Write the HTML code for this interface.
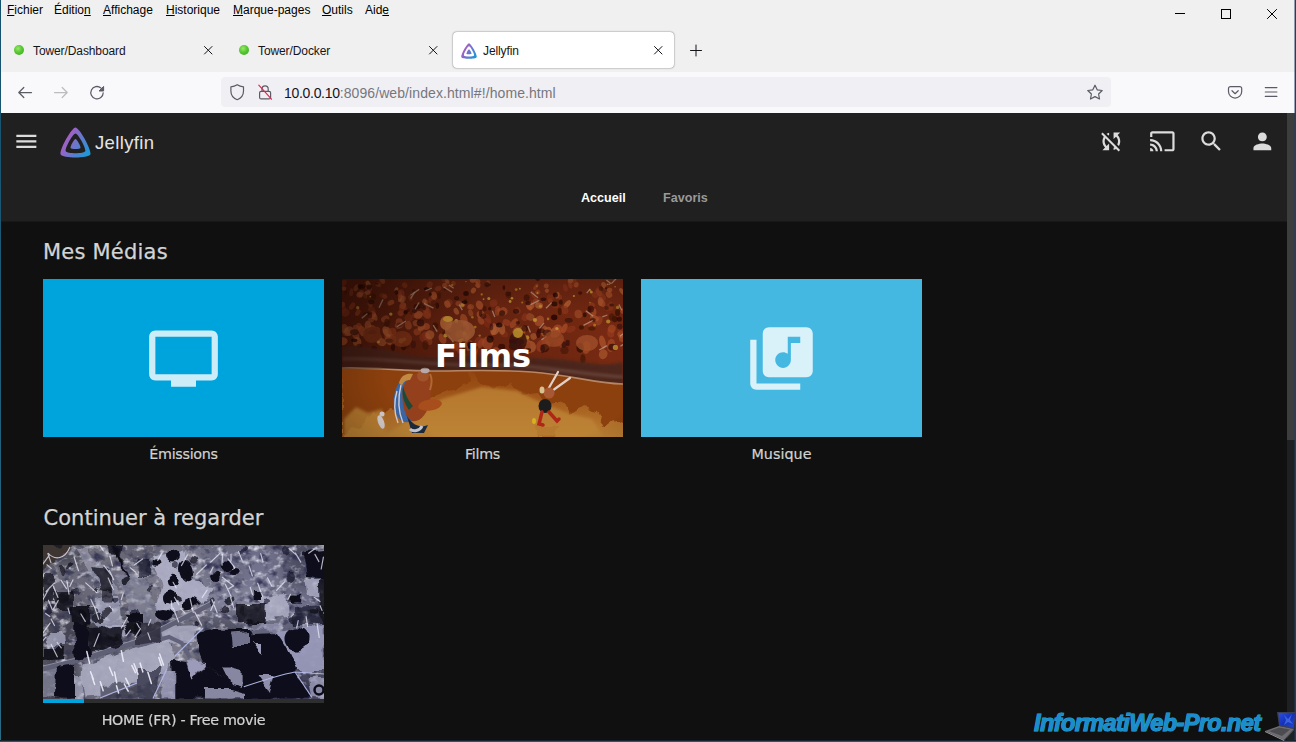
<!DOCTYPE html>
<html lang="fr">
<head>
<meta charset="utf-8">
<title>Jellyfin</title>
<style>
*{box-sizing:border-box;margin:0;padding:0}
html,body{width:1296px;height:742px;overflow:hidden;background:#101010}
body{position:relative;font-family:"Liberation Sans",sans-serif;color:#15141a}
.abs{position:absolute}
#menubar{left:0;top:0;width:1296px;height:30px;background:#f0f0f0}
#menubar span{position:absolute;top:3px;font-size:12px;line-height:14px;color:#000;white-space:nowrap}
#menubar u{text-decoration-thickness:1px;text-underline-offset:1px}
#tabbar{left:0;top:30px;width:1296px;height:42px;background:#f0f0f0}
.tabtxt{position:absolute;top:44px;font-size:12px;line-height:14px;letter-spacing:-.1px;color:#15141a;white-space:nowrap}
.dot{position:absolute;width:10px;height:10px;border-radius:50%;background:radial-gradient(circle at 40% 35%,#9be86a 0%,#55c832 45%,#3aa51e 100%)}
#acttab{left:453px;top:32px;width:221px;height:36px;background:#fff;border-radius:4px;box-shadow:0 0 2px rgba(0,0,0,.45),0 0 1px rgba(0,0,0,.3)}
#navbar{left:0;top:72px;width:1296px;height:41px;background:#f9f9fb}
#urlbar{left:221px;top:77px;width:890px;height:30px;background:#f0f0f4;border-radius:4px}
#url{left:284px;top:85px;font-size:14px;line-height:16px;white-space:nowrap;color:#15141a;letter-spacing:-.3px}
#url i{font-style:normal;color:#77767d;letter-spacing:.09px}
#page{left:1px;top:113px;width:1286px;height:628px;background:#101010;overflow:hidden}
#hdr{left:0;top:0;width:1286px;height:109px;background:linear-gradient(#202020 0,#202020 108px,#181818 108px)}
.jf{font-family:"DejaVu Sans","Liberation Sans",sans-serif}
#sb{left:1287px;top:113px;width:8px;height:628px;background:#1f2021}
#sbthumb{left:1287px;top:113px;width:8px;height:327px;background:#3d3d3d}
#bl{left:0;top:0;width:1px;height:742px;background:linear-gradient(#15506d,#2a6a85)}
#br{left:1294px;top:0;width:2px;height:742px;background:linear-gradient(to right,rgba(30,60,100,.45) 0,rgba(30,60,100,.45) 50%,#1f3f68 50%)}
#bb{left:0;top:740px;width:1296px;height:2px;background:linear-gradient(#15252f 0,#15252f 50%,#2b566c 50%)}

.ic{position:absolute;width:26.700px;height:26.700px;fill:#dcdcdc}
#logotxt{left:94px;top:18.500px;font-family:"Liberation Sans",sans-serif;font-size:18.500px;line-height:22px;letter-spacing:.35px;color:#e4e4e4;white-space:nowrap}
.tab{position:absolute;top:77px;font-family:"Liberation Sans",sans-serif;font-weight:700;font-size:12.600px;line-height:16px;white-space:nowrap}
h2.sec{position:absolute;left:42px;letter-spacing:.22px;font-family:"DejaVu Sans","Liberation Sans",sans-serif;font-weight:400;font-size:21px;line-height:26px;color:#d4d4d4;white-space:nowrap;-webkit-text-stroke:.25px #d4d4d4}
.card{position:absolute;width:281px;height:158px;overflow:hidden}
.lbl{position:absolute;width:281px;text-align:center;font-family:"DejaVu Sans","Liberation Sans",sans-serif;font-size:14.300px;line-height:18px;letter-spacing:-.3px;color:#d2d2d2;white-space:nowrap;-webkit-text-stroke:.2px #d2d2d2}
.big{position:absolute;left:103px;top:41.500px;width:75px;height:75px;fill:rgba(255,255,255,.8)}

#wm{left:1034px;top:708px;font-family:"Liberation Sans",sans-serif;font-style:italic;font-weight:700;font-size:23.500px;line-height:30px;color:#1b8ccc;white-space:nowrap;-webkit-text-stroke:1.100px #27a9d9;paint-order:stroke fill;letter-spacing:-.6px}
</style>
</head>
<body>
<div id="menubar" class="abs">
<span style="left:7px"><u>F</u>ichier</span>
<span style="left:54px">Éditio<u>n</u></span>
<span style="left:103px"><u>A</u>ffichage</span>
<span style="left:166px"><u>H</u>istorique</span>
<span style="left:233px"><u>M</u>arque-pages</span>
<span style="left:322px"><u>O</u>utils</span>
<span style="left:365px">Aid<u>e</u></span>
</div>
<div id="tabbar" class="abs"></div>
<div id="acttab" class="abs"></div>
<div class="dot" style="left:14px;top:45px"></div>
<div class="tabtxt" style="left:33px">Tower/Dashboard</div>
<div class="dot" style="left:239px;top:45px"></div>
<div class="tabtxt" style="left:258px">Tower/Docker</div>
<div class="tabtxt" style="left:483px">Jellyfin</div>
<div id="navbar" class="abs"></div>
<div id="urlbar" class="abs"></div>
<div id="url" class="abs">10.0.0.10<i>:8096/web/index.html#!/home.html</i></div>


<svg class="abs" style="left:0;top:0" width="1296" height="113" viewBox="0 0 1296 113" fill="none" stroke="#15141a" stroke-width="1.1" stroke-linecap="round" stroke-linejoin="round">
<!-- window controls -->
<g stroke="#000" stroke-width="1" stroke-linecap="butt" shape-rendering="crispEdges">
<path d="M1175 13.5h10"/>
<rect x="1221.5" y="9.500" width="9" height="9"/>
</g>
<path d="M1267.500 9.500l9 9M1276.500 9.500l-9 9" stroke="#000" stroke-width="1" stroke-linecap="square"/>
<!-- tab close buttons -->
<g stroke="#15141a" stroke-width="1">
<path d="M204.500 46.500l7.500 7.500M212 46.500l-7.500 7.500"/>
<path d="M429.500 46.500l7.500 7.500M437 46.500l-7.500 7.500"/>
<path d="M654.500 46.500l7.500 7.500M662 46.500l-7.500 7.500"/>
<path d="M690.500 50.500h11M696 45v11"/>
</g>
<!-- back -->
<g stroke="#5b5b66" stroke-width="1.25">
<path d="M31.500 92.500H19M23.800 87.500L18.800 92.500l5 5"/>
</g>
<g stroke="#bcbcc1" stroke-width="1.25">
<path d="M54.500 92.500H67M62.200 87.500l5 5-5 5"/>
</g>
<!-- reload -->
<g stroke="#5b5b66" stroke-width="1.25">
<path d="M103.200 92.800a6.200 6.200 0 1 1-2.300-4.900"/>
<path d="M103.600 86.800v4.200h-4.200z" fill="#5b5b66" stroke-width="1"/>
</g>
<!-- shield -->
<path d="M237.200 84.700c-2 1.300-4 1.900-6.300 2.100v4.200c0 4.200 2.400 7.200 6.300 8.700 3.900-1.500 6.300-4.500 6.300-8.700v-4.200c-2.300-.2-4.300-.8-6.300-2.100z" stroke="#5b5b66" stroke-width="1.2"/>
<!-- lock -->
<g stroke="#5b5b66" stroke-width="1.2">
<rect x="259.600" y="91.300" width="11" height="7.600" rx="1.500"/>
<path d="M262 91.300v-2.300a3.100 3.100 0 0 1 6.200 0v2.300"/>
</g>
<path d="M258.800 85.200l12.700 14" stroke="#e22850" stroke-width="1.2"/>
<!-- star -->
<path d="M1095 85.200l2.200 4.600 5 .7-3.600 3.500.9 5-4.500-2.400-4.500 2.400.9-5-3.600-3.500 5-.7z" stroke="#5b5b66" stroke-width="1.2"/>
<!-- pocket -->
<g stroke="#5b5b66" stroke-width="1.2">
<path d="M1230.400 86.600h9.400a1.900 1.900 0 0 1 1.900 1.900v3a6.600 6.600 0 0 1-13.200 0v-3a1.900 1.900 0 0 1 1.900-1.900z"/>
<path d="M1232 90.700l3.100 3 3.100-3"/>
</g>
<!-- hamburger -->
<path d="M1265.300 87.600h11.600M1265.300 92h11.600M1265.300 96.400h11.600" stroke="#5b5b66" stroke-width="1.2"/>
</svg>
<!-- favicon -->
<svg class="abs" style="left:461px;top:42.500px" width="16" height="16" viewBox="50 50 412 412">
<defs><linearGradient id="jg1" gradientUnits="userSpaceOnUse" x1="110.250" y1="213.300" x2="496.140" y2="436.090"><stop offset="0" stop-color="#aa5cc3"/><stop offset="1" stop-color="#00a4dc"/></linearGradient></defs>
<path d="M190.560 329.070c8.630 17.300 122.400 17.120 130.930 0 8.520-17.100-47.900-119.780-65.460-119.800-17.570 0-74.100 102.500-65.470 119.800z" fill="url(#jg1)"/>
<path fill-rule="evenodd" d="M58.750 417.030c25.970 52.150 368.860 51.550 394.550 0S308.930 56.080 256.030 56.080c-52.920 0-223.250 308.800-197.280 360.950zm68.040-45.250c-17.020-34.170 94.600-236.500 129.260-236.500 34.670 0 146.100 202.700 129.260 236.500-16.830 33.800-241.500 34.170-258.520 0z" fill="url(#jg1)"/>
</svg>

<div id="page" class="abs">
<div id="hdr" class="abs"></div>
<svg class="ic" style="left:11.700px;top:15px" viewBox="0 0 24 24"><path d="M3 18h18v-2H3v2zm0-5h18v-2H3v2zm0-7v2h18V6H3z"/></svg>
<svg class="abs" style="left:59px;top:13.500px" width="31" height="31" viewBox="50 50 412 412">
<defs><linearGradient id="jg2" gradientUnits="userSpaceOnUse" x1="110.250" y1="213.300" x2="496.140" y2="436.090"><stop offset="0" stop-color="#aa5cc3"/><stop offset="1" stop-color="#00a4dc"/></linearGradient></defs>
<path d="M190.560 329.070c8.630 17.300 122.400 17.120 130.930 0 8.520-17.100-47.900-119.780-65.460-119.800-17.570 0-74.100 102.500-65.470 119.800z" fill="url(#jg2)"/>
<path fill-rule="evenodd" d="M58.750 417.030c25.970 52.150 368.860 51.550 394.550 0S308.930 56.080 256.030 56.080c-52.920 0-223.250 308.800-197.280 360.950zm68.040-45.250c-17.020-34.170 94.600-236.500 129.260-236.500 34.670 0 146.100 202.700 129.260 236.500-16.830 33.800-241.500 34.170-258.520 0z" fill="url(#jg2)"/>
</svg>
<div id="logotxt" class="abs">Jellyfin</div>
<svg class="ic" style="left:1097.400px;top:15px" viewBox="0 0 24 24"><path d="M10 6.350V4.260c-.8.210-1.550.540-2.230.960l1.460 1.460c.250-.120.500-.240.770-.330zm-7.140-.940l2.360 2.360C4.450 8.990 4 10.440 4 12c0 2.210.910 4.200 2.360 5.640L4 20h6v-6l-2.240 2.240C6.680 15.150 6 13.660 6 12c0-1 .250-1.940.680-2.770l8.080 8.080c-.250.130-.5.250-.770.340v2.090c.8-.210 1.550-.540 2.230-.960l2.360 2.360 1.270-1.270L4.140 4.140 2.860 5.410zM20 4h-6v6l2.240-2.240C17.320 8.850 18 10.340 18 12c0 1-.250 1.940-.680 2.770l1.460 1.460C19.550 15.010 20 13.560 20 12c0-2.210-.910-4.200-2.360-5.640L20 4z"/></svg>
<svg class="ic" style="left:1147.800px;top:15px" viewBox="0 0 24 24"><path d="M21 3H3c-1.100 0-2 .9-2 2v3h2V5h18v14h-7v2h7c1.100 0 2-.9 2-2V5c0-1.100-.9-2-2-2zM1 18v3h3c0-1.660-1.340-3-3-3zm0-4v2c2.760 0 5 2.240 5 5h2c0-3.870-3.130-7-7-7zm0-4v2c4.970 0 9 4.030 9 9h2c0-6.080-4.930-11-11-11z"/></svg>
<svg class="ic" style="left:1197.300px;top:15px" viewBox="0 0 24 24"><path d="M15.500 14h-.79l-.28-.27C15.410 12.590 16 11.110 16 9.500 16 5.910 13.090 3 9.500 3S3 5.910 3 9.500 5.910 16 9.500 16c1.610 0 3.090-.59 4.230-1.570l.27.280v.79l5 4.990L20.490 19l-4.990-5zm-6 0C7.010 14 5 11.990 5 9.500S7.010 5 9.500 5 14 7.010 14 9.500 11.990 14 9.500 14z"/></svg>
<svg class="ic" style="left:1247.600px;top:15px" viewBox="0 0 24 24"><path d="M12 12c2.210 0 4-1.790 4-4s-1.790-4-4-4-4 1.790-4 4 1.790 4 4 4zm0 2c-2.670 0-8 1.340-8 4v2h16v-2c0-2.660-5.330-4-8-4z"/></svg>
<div class="tab" style="left:580px;color:#fff">Accueil</div>
<div class="tab" style="left:662px;color:#999">Favoris</div>

<h2 class="sec" style="top:126px">Mes Médias</h2>
<div class="card" style="left:42px;top:166px;background:#00a4dc">
<svg class="big" viewBox="0 0 24 24"><path fill-rule="evenodd" d="M21 3H3c-1.100 0-2 .9-2 2v12c0 1.100.9 2 2 2h5v2h8v-2h5c1.100 0 1.990-.9 1.990-2L23 5c0-1.100-.9-2-2-2zm0 14H3V5h18v12z"/></svg>
</div>
<div class="card" id="films" style="left:341px;top:166px;background:#7a3517">
<svg class="abs" style="left:0;top:0" width="281" height="158" viewBox="0 0 281 158">
<defs>
<linearGradient id="fg1" x1="0" y1="0" x2="1" y2="0"><stop offset="0" stop-color="#561c0c"/><stop offset=".5" stop-color="#6c2611"/><stop offset="1" stop-color="#7a2a12"/></linearGradient>
<linearGradient id="fg2" x1="0" y1="0" x2="0" y2="1"><stop offset="0" stop-color="#8e420f"/><stop offset=".45" stop-color="#a2581b"/><stop offset="1" stop-color="#bb8034"/></linearGradient>
<radialGradient id="fvig" cx=".6" cy=".62" r=".8"><stop offset=".55" stop-color="#000" stop-opacity="0"/><stop offset="1" stop-color="#000" stop-opacity=".3"/></radialGradient>
<linearGradient id="fleft" x1="0" y1="0" x2="1" y2="0"><stop offset="0" stop-color="#1a0500" stop-opacity=".38"/><stop offset=".5" stop-color="#1a0500" stop-opacity=".12"/><stop offset="1" stop-color="#1a0500" stop-opacity="0"/></linearGradient>
<filter id="fd1" x="-5%" y="-5%" width="110%" height="110%"><feTurbulence type="fractalNoise" baseFrequency=".09" numOctaves="2" seed="8" result="t"/><feDisplacementMap in="SourceGraphic" in2="t" scale="10" xChannelSelector="R" yChannelSelector="G"/><feGaussianBlur stdDeviation=".6"/></filter>
<filter id="fb2" x="-10%" y="-10%" width="120%" height="120%"><feGaussianBlur stdDeviation="1.600"/></filter>
<filter id="fb1" x="-10%" y="-10%" width="120%" height="120%"><feGaussianBlur stdDeviation=".7"/></filter>
<filter id="fb0" x="-5%" y="-5%" width="110%" height="110%"><feGaussianBlur stdDeviation=".55"/></filter>
<clipPath id="fsand"><path d="M0 89C30 88 60 92 90 92S150 90 190 93 250 104 281 105V158H0z"/></clipPath>
<clipPath id="fc"><rect width="281" height="158"/></clipPath>
</defs>
<g clip-path="url(#fc)">
<rect width="281" height="158" fill="url(#fg1)"/>
<g filter="url(#fb0)">
<ellipse cx="175.0" cy="53.3" rx="4.8" ry="6.1" fill="#bc6636" opacity="0.46" transform="rotate(19 175.0 53.3)"/>
<ellipse cx="218.0" cy="18.3" rx="2.0" ry="2.6" fill="#a04020" opacity="0.61" transform="rotate(-9 218.0 18.3)"/>
<ellipse cx="107.0" cy="7.0" rx="2.1" ry="3.3" fill="#92361a" opacity="0.55" transform="rotate(9 107.0 7.0)"/>
<ellipse cx="44.8" cy="54.2" rx="3.1" ry="5.1" fill="#b85a2e" opacity="0.50" transform="rotate(-40 44.8 54.2)"/>
<ellipse cx="58.9" cy="14.3" rx="3.6" ry="4.0" fill="#a04020" opacity="0.56" transform="rotate(-15 58.9 14.3)"/>
<ellipse cx="151.5" cy="50.2" rx="3.2" ry="6.0" fill="#b85a2e" opacity="0.79" transform="rotate(9 151.5 50.2)"/>
<ellipse cx="84.0" cy="23.5" rx="2.4" ry="2.7" fill="#ae4e28" opacity="0.57" transform="rotate(37 84.0 23.5)"/>
<ellipse cx="164.7" cy="43.5" rx="4.2" ry="3.1" fill="#a04020" opacity="0.74" transform="rotate(21 164.7 43.5)"/>
<ellipse cx="195.7" cy="13.1" rx="2.6" ry="2.5" fill="#a04020" opacity="0.79" transform="rotate(-38 195.7 13.1)"/>
<ellipse cx="266.7" cy="28.5" rx="3.0" ry="3.9" fill="#92361a" opacity="0.58" transform="rotate(34 266.7 28.5)"/>
<ellipse cx="236.4" cy="35.0" rx="3.9" ry="4.3" fill="#b85a2e" opacity="0.49" transform="rotate(-9 236.4 35.0)"/>
<ellipse cx="261.2" cy="75.2" rx="4.3" ry="5.0" fill="#bc6636" opacity="0.54" transform="rotate(19 261.2 75.2)"/>
<ellipse cx="30.4" cy="51.3" rx="4.8" ry="5.8" fill="#ae4e28" opacity="0.60" transform="rotate(-29 30.4 51.3)"/>
<ellipse cx="58.6" cy="34.1" rx="3.1" ry="3.0" fill="#a04020" opacity="0.77" transform="rotate(29 58.6 34.1)"/>
<ellipse cx="25.9" cy="46.8" rx="3.3" ry="5.4" fill="#b85a2e" opacity="0.70" transform="rotate(-1 25.9 46.8)"/>
<ellipse cx="280.1" cy="12.7" rx="1.9" ry="4.1" fill="#bc6636" opacity="0.77" transform="rotate(-36 280.1 12.7)"/>
<ellipse cx="66.7" cy="39.0" rx="4.3" ry="4.0" fill="#92361a" opacity="0.50" transform="rotate(-36 66.7 39.0)"/>
<ellipse cx="225.3" cy="25.1" rx="2.5" ry="4.8" fill="#bc6636" opacity="0.78" transform="rotate(40 225.3 25.1)"/>
<ellipse cx="251.9" cy="32.9" rx="2.6" ry="3.6" fill="#ae4e28" opacity="0.75" transform="rotate(-3 251.9 32.9)"/>
<ellipse cx="39.7" cy="63.1" rx="4.7" ry="4.0" fill="#bc6636" opacity="0.61" transform="rotate(22 39.7 63.1)"/>
<ellipse cx="193.6" cy="22.5" rx="2.6" ry="3.4" fill="#b85a2e" opacity="0.49" transform="rotate(28 193.6 22.5)"/>
<ellipse cx="269.7" cy="49.8" rx="3.9" ry="4.1" fill="#ae4e28" opacity="0.62" transform="rotate(25 269.7 49.8)"/>
<ellipse cx="219.7" cy="64.1" rx="4.0" ry="6.1" fill="#a04020" opacity="0.69" transform="rotate(-36 219.7 64.1)"/>
<ellipse cx="213.5" cy="26.4" rx="3.6" ry="3.1" fill="#92361a" opacity="0.54" transform="rotate(-3 213.5 26.4)"/>
<ellipse cx="268.9" cy="27.0" rx="2.5" ry="4.6" fill="#92361a" opacity="0.64" transform="rotate(-8 268.9 27.0)"/>
<ellipse cx="91.6" cy="18.0" rx="2.5" ry="3.3" fill="#a04020" opacity="0.57" transform="rotate(4 91.6 18.0)"/>
<ellipse cx="207.3" cy="59.4" rx="3.8" ry="6.1" fill="#92361a" opacity="0.79" transform="rotate(2 207.3 59.4)"/>
<ellipse cx="145.6" cy="39.3" rx="2.8" ry="5.1" fill="#92361a" opacity="0.55" transform="rotate(-30 145.6 39.3)"/>
<ellipse cx="202.2" cy="52.0" rx="3.1" ry="5.5" fill="#bc6636" opacity="0.63" transform="rotate(13 202.2 52.0)"/>
<ellipse cx="85.0" cy="36.1" rx="4.3" ry="3.4" fill="#ae4e28" opacity="0.52" transform="rotate(35 85.0 36.1)"/>
<ellipse cx="123.9" cy="46.7" rx="3.1" ry="5.0" fill="#ae4e28" opacity="0.80" transform="rotate(-12 123.9 46.7)"/>
<ellipse cx="46.6" cy="60.6" rx="3.2" ry="6.6" fill="#92361a" opacity="0.52" transform="rotate(-36 46.6 60.6)"/>
<ellipse cx="116.8" cy="24.7" rx="3.4" ry="2.6" fill="#b85a2e" opacity="0.53" transform="rotate(7 116.8 24.7)"/>
<ellipse cx="0.2" cy="26.0" rx="2.7" ry="3.4" fill="#ae4e28" opacity="0.69" transform="rotate(30 0.2 26.0)"/>
<ellipse cx="105.1" cy="2.5" rx="2.5" ry="2.0" fill="#bc6636" opacity="0.63" transform="rotate(34 105.1 2.5)"/>
<ellipse cx="82.4" cy="22.9" rx="2.3" ry="3.3" fill="#bc6636" opacity="0.67" transform="rotate(7 82.4 22.9)"/>
<ellipse cx="131.4" cy="11.5" rx="2.4" ry="3.0" fill="#b85a2e" opacity="0.79" transform="rotate(37 131.4 11.5)"/>
<ellipse cx="25.5" cy="56.0" rx="4.6" ry="4.5" fill="#a04020" opacity="0.65" transform="rotate(38 25.5 56.0)"/>
<ellipse cx="151.6" cy="24.1" rx="3.8" ry="3.7" fill="#92361a" opacity="0.60" transform="rotate(-12 151.6 24.1)"/>
<ellipse cx="138.6" cy="35.4" rx="3.9" ry="3.7" fill="#b85a2e" opacity="0.66" transform="rotate(-7 138.6 35.4)"/>
<ellipse cx="208.2" cy="21.6" rx="2.5" ry="2.4" fill="#a04020" opacity="0.62" transform="rotate(-4 208.2 21.6)"/>
<ellipse cx="40.3" cy="1.6" rx="2.6" ry="3.5" fill="#b85a2e" opacity="0.55" transform="rotate(-23 40.3 1.6)"/>
<ellipse cx="232.3" cy="1.0" rx="2.3" ry="2.3" fill="#92361a" opacity="0.72" transform="rotate(-9 232.3 1.0)"/>
<ellipse cx="137.7" cy="62.3" rx="5.0" ry="4.4" fill="#92361a" opacity="0.66" transform="rotate(20 137.7 62.3)"/>
<ellipse cx="145.6" cy="64.0" rx="5.5" ry="6.5" fill="#ae4e28" opacity="0.72" transform="rotate(-2 145.6 64.0)"/>
<ellipse cx="79.3" cy="46.1" rx="4.1" ry="5.1" fill="#ae4e28" opacity="0.61" transform="rotate(6 79.3 46.1)"/>
<ellipse cx="191.6" cy="57.5" rx="3.2" ry="3.3" fill="#bc6636" opacity="0.61" transform="rotate(-27 191.6 57.5)"/>
<ellipse cx="249.5" cy="43.3" rx="2.5" ry="5.1" fill="#92361a" opacity="0.66" transform="rotate(40 249.5 43.3)"/>
<ellipse cx="182.3" cy="61.1" rx="5.3" ry="4.9" fill="#b85a2e" opacity="0.76" transform="rotate(19 182.3 61.1)"/>
<ellipse cx="233.2" cy="5.1" rx="3.0" ry="3.2" fill="#92361a" opacity="0.65" transform="rotate(20 233.2 5.1)"/>
<ellipse cx="255.9" cy="11.4" rx="2.6" ry="3.2" fill="#92361a" opacity="0.79" transform="rotate(28 255.9 11.4)"/>
<ellipse cx="43.1" cy="39.9" rx="4.3" ry="3.0" fill="#b85a2e" opacity="0.54" transform="rotate(-30 43.1 39.9)"/>
<ellipse cx="222.5" cy="49.4" rx="2.7" ry="5.2" fill="#ae4e28" opacity="0.80" transform="rotate(22 222.5 49.4)"/>
<ellipse cx="13.7" cy="56.2" rx="3.4" ry="5.3" fill="#ae4e28" opacity="0.70" transform="rotate(-23 13.7 56.2)"/>
<ellipse cx="279.3" cy="55.4" rx="3.9" ry="3.8" fill="#b85a2e" opacity="0.59" transform="rotate(-20 279.3 55.4)"/>
<ellipse cx="18.9" cy="14.4" rx="2.8" ry="3.5" fill="#ae4e28" opacity="0.55" transform="rotate(33 18.9 14.4)"/>
<ellipse cx="161.6" cy="54.4" rx="5.1" ry="3.6" fill="#92361a" opacity="0.48" transform="rotate(36 161.6 54.4)"/>
<ellipse cx="137.5" cy="26.1" rx="3.5" ry="4.7" fill="#b85a2e" opacity="0.69" transform="rotate(-21 137.5 26.1)"/>
<ellipse cx="159.8" cy="49.8" rx="3.4" ry="5.9" fill="#bc6636" opacity="0.67" transform="rotate(-7 159.8 49.8)"/>
<ellipse cx="17.8" cy="15.9" rx="3.4" ry="2.8" fill="#b85a2e" opacity="0.73" transform="rotate(7 17.8 15.9)"/>
<ellipse cx="127.4" cy="28.2" rx="2.4" ry="2.5" fill="#a04020" opacity="0.48" transform="rotate(-36 127.4 28.2)"/>
<ellipse cx="25.6" cy="8.5" rx="2.7" ry="2.4" fill="#92361a" opacity="0.62" transform="rotate(1 25.6 8.5)"/>
<ellipse cx="30.2" cy="36.3" rx="3.6" ry="3.7" fill="#b85a2e" opacity="0.78" transform="rotate(14 30.2 36.3)"/>
<ellipse cx="191.4" cy="15.8" rx="2.1" ry="4.3" fill="#92361a" opacity="0.74" transform="rotate(-23 191.4 15.8)"/>
<ellipse cx="197.1" cy="26.6" rx="3.9" ry="3.2" fill="#bc6636" opacity="0.70" transform="rotate(9 197.1 26.6)"/>
<ellipse cx="106.3" cy="49.3" rx="3.5" ry="3.9" fill="#92361a" opacity="0.79" transform="rotate(6 106.3 49.3)"/>
<ellipse cx="145.4" cy="44.0" rx="3.9" ry="5.1" fill="#92361a" opacity="0.47" transform="rotate(-36 145.4 44.0)"/>
<ellipse cx="9.3" cy="13.3" rx="1.9" ry="4.0" fill="#92361a" opacity="0.68" transform="rotate(4 9.3 13.3)"/>
<ellipse cx="0.1" cy="30.1" rx="4.1" ry="4.1" fill="#92361a" opacity="0.56" transform="rotate(19 0.1 30.1)"/>
<ellipse cx="28.0" cy="10.6" rx="2.0" ry="2.8" fill="#92361a" opacity="0.75" transform="rotate(20 28.0 10.6)"/>
<ellipse cx="42.7" cy="17.3" rx="2.4" ry="2.6" fill="#a04020" opacity="0.69" transform="rotate(-36 42.7 17.3)"/>
<ellipse cx="135.5" cy="2.4" rx="3.0" ry="2.5" fill="#ae4e28" opacity="0.69" transform="rotate(18 135.5 2.4)"/>
<ellipse cx="132.6" cy="69.3" rx="3.4" ry="6.0" fill="#a04020" opacity="0.61" transform="rotate(-10 132.6 69.3)"/>
<ellipse cx="204.9" cy="11.7" rx="2.1" ry="2.1" fill="#b85a2e" opacity="0.68" transform="rotate(39 204.9 11.7)"/>
<ellipse cx="112.7" cy="67.7" rx="4.1" ry="4.6" fill="#92361a" opacity="0.58" transform="rotate(-32 112.7 67.7)"/>
<ellipse cx="205.8" cy="51.4" rx="3.1" ry="3.8" fill="#b85a2e" opacity="0.78" transform="rotate(37 205.8 51.4)"/>
<ellipse cx="121.0" cy="69.6" rx="3.1" ry="3.8" fill="#92361a" opacity="0.51" transform="rotate(-36 121.0 69.6)"/>
<ellipse cx="154.1" cy="73.2" rx="4.8" ry="5.0" fill="#ae4e28" opacity="0.70" transform="rotate(-10 154.1 73.2)"/>
<ellipse cx="252.6" cy="39.1" rx="4.6" ry="2.9" fill="#b85a2e" opacity="0.68" transform="rotate(23 252.6 39.1)"/>
<ellipse cx="111.6" cy="4.2" rx="2.0" ry="2.6" fill="#a04020" opacity="0.67" transform="rotate(-36 111.6 4.2)"/>
<ellipse cx="267.0" cy="15.5" rx="3.1" ry="3.5" fill="#b85a2e" opacity="0.64" transform="rotate(-30 267.0 15.5)"/>
<ellipse cx="260.5" cy="63.1" rx="3.2" ry="6.8" fill="#b85a2e" opacity="0.66" transform="rotate(-13 260.5 63.1)"/>
<ellipse cx="175.6" cy="31.7" rx="3.0" ry="3.7" fill="#92361a" opacity="0.63" transform="rotate(-24 175.6 31.7)"/>
<ellipse cx="203.9" cy="65.1" rx="3.9" ry="5.0" fill="#b85a2e" opacity="0.64" transform="rotate(-23 203.9 65.1)"/>
<ellipse cx="87.6" cy="5.7" rx="2.9" ry="3.5" fill="#a04020" opacity="0.50" transform="rotate(28 87.6 5.7)"/>
<ellipse cx="23.0" cy="16.7" rx="2.0" ry="3.1" fill="#bc6636" opacity="0.68" transform="rotate(-5 23.0 16.7)"/>
<ellipse cx="17.3" cy="47.2" rx="2.7" ry="3.6" fill="#a04020" opacity="0.76" transform="rotate(-28 17.3 47.2)"/>
<ellipse cx="20.2" cy="52.1" rx="3.7" ry="5.5" fill="#ae4e28" opacity="0.76" transform="rotate(-24 20.2 52.1)"/>
<ellipse cx="161.5" cy="32.4" rx="4.1" ry="4.3" fill="#ae4e28" opacity="0.70" transform="rotate(14 161.5 32.4)"/>
<ellipse cx="75.2" cy="52.9" rx="3.7" ry="3.5" fill="#ae4e28" opacity="0.56" transform="rotate(-23 75.2 52.9)"/>
<ellipse cx="73.8" cy="44.1" rx="3.2" ry="3.1" fill="#bc6636" opacity="0.46" transform="rotate(-25 73.8 44.1)"/>
<ellipse cx="14.2" cy="8.7" rx="2.3" ry="3.7" fill="#bc6636" opacity="0.46" transform="rotate(27 14.2 8.7)"/>
<ellipse cx="120.5" cy="25.8" rx="2.8" ry="2.5" fill="#bc6636" opacity="0.67" transform="rotate(-20 120.5 25.8)"/>
<ellipse cx="204.2" cy="6.8" rx="2.5" ry="2.3" fill="#b85a2e" opacity="0.61" transform="rotate(15 204.2 6.8)"/>
<ellipse cx="223.3" cy="8.8" rx="2.2" ry="3.8" fill="#92361a" opacity="0.66" transform="rotate(-19 223.3 8.8)"/>
<ellipse cx="124.0" cy="55.2" rx="5.3" ry="4.9" fill="#92361a" opacity="0.66" transform="rotate(-27 124.0 55.2)"/>
<ellipse cx="35.7" cy="58.3" rx="4.7" ry="4.0" fill="#ae4e28" opacity="0.46" transform="rotate(33 35.7 58.3)"/>
<ellipse cx="66.3" cy="46.4" rx="3.4" ry="4.3" fill="#b85a2e" opacity="0.55" transform="rotate(-15 66.3 46.4)"/>
<ellipse cx="85.2" cy="33.7" rx="4.0" ry="4.7" fill="#a04020" opacity="0.57" transform="rotate(-9 85.2 33.7)"/>
<ellipse cx="228.8" cy="50.3" rx="5.0" ry="3.3" fill="#92361a" opacity="0.59" transform="rotate(-22 228.8 50.3)"/>
<ellipse cx="40.1" cy="16.3" rx="2.6" ry="2.4" fill="#92361a" opacity="0.48" transform="rotate(-4 40.1 16.3)"/>
<ellipse cx="253.0" cy="15.9" rx="3.3" ry="2.9" fill="#92361a" opacity="0.75" transform="rotate(39 253.0 15.9)"/>
<ellipse cx="25.6" cy="13.6" rx="3.0" ry="2.3" fill="#bc6636" opacity="0.66" transform="rotate(-17 25.6 13.6)"/>
<ellipse cx="228.5" cy="1.7" rx="2.6" ry="2.9" fill="#bc6636" opacity="0.58" transform="rotate(20 228.5 1.7)"/>
<ellipse cx="153.3" cy="51.1" rx="3.8" ry="5.5" fill="#bc6636" opacity="0.77" transform="rotate(31 153.3 51.1)"/>
<ellipse cx="188.3" cy="38.0" rx="4.2" ry="3.7" fill="#bc6636" opacity="0.46" transform="rotate(26 188.3 38.0)"/>
<ellipse cx="58.1" cy="19.1" rx="2.0" ry="4.0" fill="#bc6636" opacity="0.65" transform="rotate(12 58.1 19.1)"/>
<ellipse cx="86.2" cy="60.7" rx="3.7" ry="5.7" fill="#ae4e28" opacity="0.46" transform="rotate(-29 86.2 60.7)"/>
<ellipse cx="188.3" cy="67.8" rx="5.7" ry="6.0" fill="#bc6636" opacity="0.66" transform="rotate(-14 188.3 67.8)"/>
<ellipse cx="135.7" cy="6.8" rx="1.9" ry="2.6" fill="#bc6636" opacity="0.60" transform="rotate(-40 135.7 6.8)"/>
<ellipse cx="188.6" cy="26.8" rx="3.7" ry="3.7" fill="#b85a2e" opacity="0.77" transform="rotate(38 188.6 26.8)"/>
<ellipse cx="90.3" cy="21.3" rx="3.6" ry="4.4" fill="#a04020" opacity="0.54" transform="rotate(-28 90.3 21.3)"/>
<ellipse cx="59.8" cy="20.3" rx="2.5" ry="3.7" fill="#b85a2e" opacity="0.48" transform="rotate(12 59.8 20.3)"/>
<ellipse cx="215.4" cy="16.4" rx="2.0" ry="3.4" fill="#bc6636" opacity="0.70" transform="rotate(13 215.4 16.4)"/>
<ellipse cx="64.8" cy="31.8" rx="3.5" ry="3.2" fill="#92361a" opacity="0.55" transform="rotate(37 64.8 31.8)"/>
<ellipse cx="249.9" cy="26.2" rx="3.0" ry="2.8" fill="#a04020" opacity="0.65" transform="rotate(37 249.9 26.2)"/>
<ellipse cx="158.3" cy="32.0" rx="2.9" ry="2.9" fill="#a04020" opacity="0.71" transform="rotate(-33 158.3 32.0)"/>
<ellipse cx="267.6" cy="11.0" rx="2.7" ry="2.2" fill="#b85a2e" opacity="0.75" transform="rotate(9 267.6 11.0)"/>
<ellipse cx="260.4" cy="18.3" rx="3.2" ry="4.1" fill="#92361a" opacity="0.74" transform="rotate(-40 260.4 18.3)"/>
<ellipse cx="54.4" cy="10.5" rx="1.9" ry="2.3" fill="#bc6636" opacity="0.72" transform="rotate(33 54.4 10.5)"/>
<ellipse cx="213.0" cy="53.5" rx="4.9" ry="5.7" fill="#bc6636" opacity="0.78" transform="rotate(40 213.0 53.5)"/>
<ellipse cx="244.3" cy="68.5" rx="4.2" ry="6.4" fill="#b85a2e" opacity="0.52" transform="rotate(7 244.3 68.5)"/>
<ellipse cx="48.6" cy="60.3" rx="5.7" ry="5.9" fill="#b85a2e" opacity="0.59" transform="rotate(29 48.6 60.3)"/>
<ellipse cx="130.9" cy="0.4" rx="3.0" ry="3.5" fill="#b85a2e" opacity="0.69" transform="rotate(23 130.9 0.4)"/>
<ellipse cx="107.1" cy="23.4" rx="3.5" ry="3.5" fill="#a04020" opacity="0.46" transform="rotate(21 107.1 23.4)"/>
<ellipse cx="280.7" cy="58.8" rx="3.4" ry="4.4" fill="#b85a2e" opacity="0.55" transform="rotate(23 280.7 58.8)"/>
<ellipse cx="180.5" cy="54.6" rx="3.0" ry="3.5" fill="#92361a" opacity="0.57" transform="rotate(-32 180.5 54.6)"/>
<ellipse cx="145.9" cy="3.7" rx="2.3" ry="2.3" fill="#ae4e28" opacity="0.50" transform="rotate(-28 145.9 3.7)"/>
<ellipse cx="155.5" cy="31.9" rx="2.6" ry="4.8" fill="#b85a2e" opacity="0.48" transform="rotate(5 155.5 31.9)"/>
<ellipse cx="36.3" cy="5.7" rx="3.0" ry="2.2" fill="#ae4e28" opacity="0.46" transform="rotate(31 36.3 5.7)"/>
<ellipse cx="128.8" cy="27.8" rx="3.2" ry="2.6" fill="#b85a2e" opacity="0.52" transform="rotate(16 128.8 27.8)"/>
<ellipse cx="3.4" cy="33.6" rx="4.4" ry="4.2" fill="#92361a" opacity="0.63" transform="rotate(-34 3.4 33.6)"/>
<ellipse cx="45.0" cy="52.5" rx="4.0" ry="5.8" fill="#bc6636" opacity="0.67" transform="rotate(-36 45.0 52.5)"/>
<ellipse cx="60.6" cy="28.0" rx="3.7" ry="4.5" fill="#92361a" opacity="0.77" transform="rotate(8 60.6 28.0)"/>
<ellipse cx="4.2" cy="52.9" rx="3.1" ry="4.2" fill="#a04020" opacity="0.72" transform="rotate(14 4.2 52.9)"/>
<ellipse cx="234.4" cy="5.9" rx="2.2" ry="2.7" fill="#b85a2e" opacity="0.54" transform="rotate(20 234.4 5.9)"/>
<ellipse cx="102.1" cy="0.2" rx="2.5" ry="3.1" fill="#92361a" opacity="0.48" transform="rotate(8 102.1 0.2)"/>
<ellipse cx="10.1" cy="27.1" rx="2.4" ry="4.1" fill="#92361a" opacity="0.79" transform="rotate(36 10.1 27.1)"/>
<ellipse cx="128.7" cy="34.0" rx="2.4" ry="3.6" fill="#bc6636" opacity="0.46" transform="rotate(-17 128.7 34.0)"/>
<ellipse cx="228.3" cy="6.5" rx="1.9" ry="3.2" fill="#a04020" opacity="0.72" transform="rotate(-21 228.3 6.5)"/>
<ellipse cx="82.6" cy="58.4" rx="5.3" ry="5.1" fill="#a04020" opacity="0.49" transform="rotate(11 82.6 58.4)"/>
<ellipse cx="105.4" cy="25.1" rx="3.1" ry="3.8" fill="#b85a2e" opacity="0.79" transform="rotate(-23 105.4 25.1)"/>
<ellipse cx="73.9" cy="35.6" rx="4.0" ry="3.0" fill="#92361a" opacity="0.68" transform="rotate(-33 73.9 35.6)"/>
<ellipse cx="2.3" cy="49.7" rx="3.7" ry="4.6" fill="#bc6636" opacity="0.53" transform="rotate(-1 2.3 49.7)"/>
<ellipse cx="15.8" cy="33.6" rx="2.3" ry="3.6" fill="#a04020" opacity="0.72" transform="rotate(31 15.8 33.6)"/>
<ellipse cx="83.7" cy="29.3" rx="3.6" ry="4.9" fill="#a04020" opacity="0.65" transform="rotate(-5 83.7 29.3)"/>
<ellipse cx="200.4" cy="66.6" rx="5.8" ry="7.0" fill="#a04020" opacity="0.75" transform="rotate(35 200.4 66.6)"/>
<ellipse cx="261.9" cy="6.2" rx="2.4" ry="3.3" fill="#bc6636" opacity="0.67" transform="rotate(-28 261.9 6.2)"/>
<ellipse cx="259.8" cy="23.9" rx="3.2" ry="4.3" fill="#b85a2e" opacity="0.61" transform="rotate(-32 259.8 23.9)"/>
<ellipse cx="138.9" cy="41.8" rx="2.9" ry="4.1" fill="#ae4e28" opacity="0.71" transform="rotate(-26 138.9 41.8)"/>
<ellipse cx="96.1" cy="9.5" rx="3.4" ry="2.5" fill="#a04020" opacity="0.62" transform="rotate(-22 96.1 9.5)"/>
<ellipse cx="208.3" cy="18.8" rx="3.5" ry="3.6" fill="#92361a" opacity="0.51" transform="rotate(-9 208.3 18.8)"/>
<ellipse cx="197.3" cy="41.9" rx="4.6" ry="5.5" fill="#b85a2e" opacity="0.66" transform="rotate(32 197.3 41.9)"/>
<ellipse cx="14.6" cy="49.5" rx="4.1" ry="3.1" fill="#ae4e28" opacity="0.69" transform="rotate(38 14.6 49.5)"/>
<ellipse cx="138.9" cy="64.4" rx="3.1" ry="5.5" fill="#ae4e28" opacity="0.59" transform="rotate(27 138.9 64.4)"/>
<ellipse cx="171.8" cy="44.2" rx="3.0" ry="5.7" fill="#ae4e28" opacity="0.70" transform="rotate(35 171.8 44.2)"/>
<ellipse cx="26.1" cy="4.6" rx="2.3" ry="3.1" fill="#bc6636" opacity="0.70" transform="rotate(-32 26.1 4.6)"/>
<ellipse cx="268.8" cy="54.0" rx="3.5" ry="4.5" fill="#a04020" opacity="0.54" transform="rotate(-2 268.8 54.0)"/>
<ellipse cx="84.0" cy="57.3" rx="3.7" ry="5.4" fill="#92361a" opacity="0.61" transform="rotate(-21 84.0 57.3)"/>
<ellipse cx="184.3" cy="67.0" rx="4.0" ry="5.7" fill="#92361a" opacity="0.48" transform="rotate(5 184.3 67.0)"/>
<ellipse cx="279.3" cy="50.2" rx="3.8" ry="4.7" fill="#92361a" opacity="0.51" transform="rotate(-23 279.3 50.2)"/>
<ellipse cx="257.1" cy="13.5" rx="2.7" ry="4.1" fill="#a04020" opacity="0.77" transform="rotate(-22 257.1 13.5)"/>
<ellipse cx="121.9" cy="40.3" rx="3.6" ry="5.5" fill="#b85a2e" opacity="0.64" transform="rotate(-19 121.9 40.3)"/>
<ellipse cx="117.9" cy="55.4" rx="5.0" ry="4.1" fill="#ae4e28" opacity="0.52" transform="rotate(14 117.9 55.4)"/>
<ellipse cx="100.5" cy="59.7" rx="3.6" ry="5.4" fill="#ae4e28" opacity="0.78" transform="rotate(-26 100.5 59.7)"/>
<ellipse cx="193.8" cy="7.8" rx="1.8" ry="3.7" fill="#a04020" opacity="0.75" transform="rotate(34 193.8 7.8)"/>
<ellipse cx="50.3" cy="52.4" rx="4.1" ry="3.7" fill="#a04020" opacity="0.70" transform="rotate(-7 50.3 52.4)"/>
<ellipse cx="28.1" cy="58.7" rx="5.3" ry="4.3" fill="#a04020" opacity="0.70" transform="rotate(12 28.1 58.7)"/>
<ellipse cx="280.7" cy="32.0" rx="2.4" ry="2.8" fill="#ae4e28" opacity="0.78" transform="rotate(24 280.7 32.0)"/>
<ellipse cx="114.3" cy="32.3" rx="2.4" ry="3.7" fill="#bc6636" opacity="0.64" transform="rotate(-27 114.3 32.3)"/>
<ellipse cx="191.5" cy="22.9" rx="2.7" ry="2.5" fill="#92361a" opacity="0.49" transform="rotate(-9 191.5 22.9)"/>
<ellipse cx="32.3" cy="36.8" rx="2.5" ry="5.4" fill="#bc6636" opacity="0.58" transform="rotate(-26 32.3 36.8)"/>
<ellipse cx="76.5" cy="35.9" rx="4.6" ry="3.8" fill="#b85a2e" opacity="0.76" transform="rotate(-23 76.5 35.9)"/>
<ellipse cx="107.3" cy="43.4" rx="4.7" ry="3.8" fill="#bc6636" opacity="0.47" transform="rotate(-1 107.3 43.4)"/>
<ellipse cx="15.1" cy="62.9" rx="4.3" ry="4.9" fill="#bc6636" opacity="0.67" transform="rotate(-8 15.1 62.9)"/>
<ellipse cx="79.8" cy="48.4" rx="3.3" ry="4.4" fill="#bc6636" opacity="0.48" transform="rotate(36 79.8 48.4)"/>
<ellipse cx="57.0" cy="46.4" rx="4.4" ry="3.3" fill="#b85a2e" opacity="0.50" transform="rotate(-19 57.0 46.4)"/>
<ellipse cx="180.6" cy="51.3" rx="3.3" ry="4.5" fill="#b85a2e" opacity="0.73" transform="rotate(21 180.6 51.3)"/>
<ellipse cx="29.6" cy="39.7" rx="3.0" ry="3.8" fill="#ae4e28" opacity="0.64" transform="rotate(31 29.6 39.7)"/>
<ellipse cx="34.4" cy="52.4" rx="3.6" ry="5.0" fill="#92361a" opacity="0.76" transform="rotate(26 34.4 52.4)"/>
<ellipse cx="258.4" cy="22.5" rx="2.7" ry="4.4" fill="#b85a2e" opacity="0.63" transform="rotate(-3 258.4 22.5)"/>
<ellipse cx="116.5" cy="68.7" rx="3.4" ry="5.9" fill="#ae4e28" opacity="0.45" transform="rotate(-20 116.5 68.7)"/>
<ellipse cx="87.8" cy="55.8" rx="4.6" ry="4.6" fill="#bc6636" opacity="0.69" transform="rotate(3 87.8 55.8)"/>
<ellipse cx="257.0" cy="41.8" rx="3.2" ry="4.8" fill="#ae4e28" opacity="0.51" transform="rotate(23 257.0 41.8)"/>
<ellipse cx="183.2" cy="38.3" rx="3.5" ry="4.0" fill="#a04020" opacity="0.47" transform="rotate(28 183.2 38.3)"/>
<ellipse cx="0.6" cy="62.3" rx="5.0" ry="4.0" fill="#b85a2e" opacity="0.75" transform="rotate(-10 0.6 62.3)"/>
<ellipse cx="187.1" cy="28.3" rx="2.4" ry="3.5" fill="#b85a2e" opacity="0.68" transform="rotate(-39 187.1 28.3)"/>
<ellipse cx="57.6" cy="15.7" rx="2.0" ry="4.2" fill="#a04020" opacity="0.60" transform="rotate(-1 57.6 15.7)"/>
<ellipse cx="62.7" cy="6.2" rx="2.6" ry="3.0" fill="#92361a" opacity="0.72" transform="rotate(-33 62.7 6.2)"/>
<ellipse cx="250.6" cy="42.1" rx="2.5" ry="4.1" fill="#92361a" opacity="0.46" transform="rotate(-16 250.6 42.1)"/>
<ellipse cx="29.9" cy="31.4" rx="3.2" ry="4.6" fill="#92361a" opacity="0.55" transform="rotate(-31 29.9 31.4)"/>
<ellipse cx="7.0" cy="52.1" rx="4.7" ry="5.1" fill="#bc6636" opacity="0.66" transform="rotate(39 7.0 52.1)"/>
<ellipse cx="57.4" cy="43.5" rx="3.6" ry="4.3" fill="#ae4e28" opacity="0.69" transform="rotate(-15 57.4 43.5)"/>
<ellipse cx="28.1" cy="25.3" rx="2.3" ry="2.9" fill="#ae4e28" opacity="0.46" transform="rotate(-33 28.1 25.3)"/>
<ellipse cx="84.3" cy="47.5" rx="3.6" ry="3.5" fill="#ae4e28" opacity="0.76" transform="rotate(-16 84.3 47.5)"/>
<ellipse cx="61.0" cy="26.7" rx="3.0" ry="3.5" fill="#ae4e28" opacity="0.55" transform="rotate(27 61.0 26.7)"/>
<ellipse cx="215.7" cy="50.7" rx="4.9" ry="5.2" fill="#ae4e28" opacity="0.75" transform="rotate(14 215.7 50.7)"/>
<ellipse cx="222.8" cy="31.0" rx="3.6" ry="4.3" fill="#92361a" opacity="0.71" transform="rotate(-15 222.8 31.0)"/>
<ellipse cx="92.0" cy="16.5" rx="3.1" ry="3.9" fill="#b85a2e" opacity="0.74" transform="rotate(-20 92.0 16.5)"/>
<ellipse cx="102.7" cy="6.4" rx="2.6" ry="2.6" fill="#b85a2e" opacity="0.67" transform="rotate(-17 102.7 6.4)"/>
<ellipse cx="1.9" cy="9.6" rx="2.4" ry="2.2" fill="#ae4e28" opacity="0.70" transform="rotate(19 1.9 9.6)"/>
<ellipse cx="269.1" cy="66.3" rx="4.0" ry="6.7" fill="#ae4e28" opacity="0.62" transform="rotate(7 269.1 66.3)"/>
<ellipse cx="1.9" cy="3.8" rx="2.5" ry="3.2" fill="#92361a" opacity="0.54" transform="rotate(33 1.9 3.8)"/>
<ellipse cx="126.8" cy="66.5" rx="4.8" ry="5.4" fill="#b85a2e" opacity="0.59" transform="rotate(31 126.8 66.5)"/>
<ellipse cx="123.7" cy="59.1" rx="3.5" ry="4.3" fill="#bc6636" opacity="0.47" transform="rotate(28 123.7 59.1)"/>
<ellipse cx="136.0" cy="6.1" rx="2.7" ry="2.5" fill="#ae4e28" opacity="0.71" transform="rotate(12 136.0 6.1)"/>
<ellipse cx="48.9" cy="23.7" rx="3.6" ry="2.5" fill="#ae4e28" opacity="0.77" transform="rotate(-30 48.9 23.7)"/>
<ellipse cx="214.8" cy="63.5" rx="4.9" ry="3.7" fill="#92361a" opacity="0.63" transform="rotate(20 214.8 63.5)"/>
<ellipse cx="60.8" cy="20.2" rx="2.8" ry="3.7" fill="#bc6636" opacity="0.47" transform="rotate(26 60.8 20.2)"/>
<ellipse cx="68.4" cy="19.0" rx="2.1" ry="2.9" fill="#92361a" opacity="0.55" transform="rotate(-28 68.4 19.0)"/>
<ellipse cx="44.9" cy="43.8" rx="2.7" ry="4.1" fill="#3a1008" opacity="0.62"/>
<ellipse cx="29.2" cy="22.9" rx="3.0" ry="2.3" fill="#2a0a05" opacity="0.74"/>
<ellipse cx="127.2" cy="64.9" rx="2.1" ry="2.6" fill="#1e0804" opacity="0.61"/>
<ellipse cx="129.2" cy="66.5" rx="3.6" ry="3.5" fill="#2a0a05" opacity="0.80"/>
<ellipse cx="160.1" cy="34.1" rx="3.0" ry="2.9" fill="#401409" opacity="0.83"/>
<ellipse cx="34.8" cy="4.5" rx="1.6" ry="1.1" fill="#1e0804" opacity="0.65"/>
<ellipse cx="264.1" cy="8.8" rx="1.1" ry="1.4" fill="#1e0804" opacity="0.51"/>
<ellipse cx="30.6" cy="53.3" rx="4.2" ry="2.0" fill="#2a0a05" opacity="0.60"/>
<ellipse cx="82.1" cy="29.0" rx="1.9" ry="2.4" fill="#1e0804" opacity="0.56"/>
<ellipse cx="93.3" cy="47.1" rx="3.0" ry="3.9" fill="#401409" opacity="0.72"/>
<ellipse cx="238.2" cy="14.1" rx="2.1" ry="1.8" fill="#2a0a05" opacity="0.54"/>
<ellipse cx="248.8" cy="30.1" rx="3.2" ry="3.5" fill="#2a0a05" opacity="0.64"/>
<ellipse cx="240.8" cy="79.9" rx="2.6" ry="4.7" fill="#401409" opacity="0.63"/>
<ellipse cx="50.9" cy="68.3" rx="2.1" ry="4.1" fill="#1e0804" opacity="0.59"/>
<ellipse cx="174.1" cy="32.3" rx="2.9" ry="2.5" fill="#1e0804" opacity="0.63"/>
<ellipse cx="54.5" cy="13.4" rx="1.9" ry="2.4" fill="#2a0a05" opacity="0.82"/>
<ellipse cx="218.8" cy="23.2" rx="2.0" ry="2.6" fill="#3a1008" opacity="0.80"/>
<ellipse cx="3.5" cy="13.1" rx="1.3" ry="2.0" fill="#3a1008" opacity="0.52"/>
<ellipse cx="63.0" cy="67.3" rx="4.4" ry="2.7" fill="#401409" opacity="0.51"/>
<ellipse cx="196.3" cy="55.3" rx="2.1" ry="3.7" fill="#2a0a05" opacity="0.59"/>
<ellipse cx="18.4" cy="7.6" rx="2.8" ry="2.4" fill="#1e0804" opacity="0.77"/>
<ellipse cx="71.7" cy="11.4" rx="1.6" ry="1.3" fill="#3a1008" opacity="0.58"/>
<ellipse cx="270.6" cy="68.2" rx="4.4" ry="3.4" fill="#3a1008" opacity="0.80"/>
<ellipse cx="205.0" cy="53.7" rx="4.3" ry="3.3" fill="#401409" opacity="0.73"/>
<ellipse cx="27.3" cy="34.1" rx="3.1" ry="1.5" fill="#3a1008" opacity="0.54"/>
<ellipse cx="22.7" cy="17.3" rx="2.0" ry="3.1" fill="#401409" opacity="0.50"/>
<ellipse cx="195.7" cy="0.1" rx="2.4" ry="1.8" fill="#1e0804" opacity="0.61"/>
<ellipse cx="178.2" cy="62.8" rx="4.2" ry="2.8" fill="#3a1008" opacity="0.74"/>
<ellipse cx="166.3" cy="14.9" rx="2.9" ry="2.3" fill="#2a0a05" opacity="0.58"/>
<ellipse cx="57.7" cy="45.6" rx="3.2" ry="2.4" fill="#3a1008" opacity="0.57"/>
<ellipse cx="258.9" cy="9.7" rx="2.2" ry="2.4" fill="#401409" opacity="0.58"/>
<ellipse cx="123.4" cy="22.6" rx="1.8" ry="2.5" fill="#401409" opacity="0.78"/>
<ellipse cx="182.7" cy="49.4" rx="3.4" ry="3.2" fill="#2a0a05" opacity="0.61"/>
<ellipse cx="157.3" cy="45.9" rx="3.3" ry="2.5" fill="#1e0804" opacity="0.79"/>
<ellipse cx="239.4" cy="48.4" rx="2.6" ry="2.2" fill="#3a1008" opacity="0.76"/>
<ellipse cx="171.6" cy="62.5" rx="4.6" ry="2.5" fill="#2a0a05" opacity="0.57"/>
<ellipse cx="201.4" cy="20.3" rx="2.9" ry="1.8" fill="#1e0804" opacity="0.61"/>
<ellipse cx="31.7" cy="17.2" rx="2.4" ry="3.0" fill="#401409" opacity="0.65"/>
<ellipse cx="72.4" cy="32.3" rx="2.6" ry="1.8" fill="#401409" opacity="0.83"/>
<ellipse cx="17.4" cy="68.5" rx="3.2" ry="3.8" fill="#3a1008" opacity="0.68"/>
<ellipse cx="186.1" cy="24.1" rx="2.8" ry="2.1" fill="#3a1008" opacity="0.82"/>
<ellipse cx="198.9" cy="51.7" rx="3.7" ry="2.4" fill="#2a0a05" opacity="0.60"/>
<ellipse cx="275.6" cy="33.7" rx="2.6" ry="3.4" fill="#3a1008" opacity="0.77"/>
<ellipse cx="131.5" cy="70.6" rx="3.4" ry="3.8" fill="#3a1008" opacity="0.61"/>
<ellipse cx="200.6" cy="69.8" rx="2.3" ry="4.4" fill="#401409" opacity="0.69"/>
<ellipse cx="221.9" cy="65.6" rx="2.4" ry="3.4" fill="#3a1008" opacity="0.84"/>
<ellipse cx="225.6" cy="63.9" rx="2.1" ry="3.2" fill="#3a1008" opacity="0.83"/>
<ellipse cx="212.5" cy="24.9" rx="3.0" ry="2.5" fill="#1e0804" opacity="0.75"/>
<ellipse cx="272.7" cy="40.1" rx="2.8" ry="3.2" fill="#1e0804" opacity="0.52"/>
<ellipse cx="269.6" cy="26.0" rx="2.4" ry="1.5" fill="#3a1008" opacity="0.69"/>
<ellipse cx="71.2" cy="65.5" rx="2.7" ry="4.0" fill="#401409" opacity="0.73"/>
<ellipse cx="159.7" cy="67.7" rx="3.5" ry="3.0" fill="#1e0804" opacity="0.58"/>
<ellipse cx="122.6" cy="23.2" rx="2.9" ry="1.8" fill="#1e0804" opacity="0.77"/>
<ellipse cx="264.7" cy="29.0" rx="2.0" ry="2.1" fill="#401409" opacity="0.59"/>
<ellipse cx="149.4" cy="48.0" rx="1.8" ry="3.4" fill="#2a0a05" opacity="0.54"/>
<ellipse cx="84.5" cy="9.8" rx="2.7" ry="1.5" fill="#1e0804" opacity="0.83"/>
<ellipse cx="12.3" cy="61.3" rx="3.1" ry="1.9" fill="#1e0804" opacity="0.79"/>
<ellipse cx="147.7" cy="29.8" rx="1.6" ry="1.7" fill="#1e0804" opacity="0.61"/>
<ellipse cx="130.9" cy="68.2" rx="4.8" ry="2.5" fill="#1e0804" opacity="0.60"/>
<ellipse cx="122.8" cy="71.0" rx="2.1" ry="3.6" fill="#401409" opacity="0.53"/>
<ellipse cx="146.3" cy="5.7" rx="2.7" ry="1.3" fill="#3a1008" opacity="0.72"/>
<ellipse cx="142.6" cy="29.6" rx="1.9" ry="2.9" fill="#401409" opacity="0.68"/>
<ellipse cx="103.0" cy="10.3" rx="1.2" ry="1.4" fill="#401409" opacity="0.64"/>
<ellipse cx="269.8" cy="38.1" rx="2.9" ry="3.7" fill="#401409" opacity="0.59"/>
<ellipse cx="63.7" cy="33.2" rx="2.1" ry="2.1" fill="#1e0804" opacity="0.85"/>
<ellipse cx="121.5" cy="49.3" rx="3.0" ry="1.9" fill="#3a1008" opacity="0.52"/>
<ellipse cx="119.6" cy="61.1" rx="3.6" ry="2.5" fill="#3a1008" opacity="0.74"/>
<ellipse cx="217.8" cy="32.4" rx="2.0" ry="3.6" fill="#401409" opacity="0.70"/>
<ellipse cx="242.7" cy="35.8" rx="1.9" ry="2.4" fill="#2a0a05" opacity="0.81"/>
<ellipse cx="83.5" cy="65.9" rx="3.0" ry="4.7" fill="#3a1008" opacity="0.53"/>
<ellipse cx="78.6" cy="44.0" rx="3.9" ry="3.4" fill="#2a0a05" opacity="0.76"/>
<ellipse cx="104.4" cy="54.8" rx="4.1" ry="2.9" fill="#401409" opacity="0.63"/>
<ellipse cx="75.0" cy="27.7" rx="3.4" ry="2.7" fill="#2a0a05" opacity="0.62"/>
<ellipse cx="12.5" cy="53.3" rx="4.3" ry="3.0" fill="#401409" opacity="0.74"/>
<ellipse cx="32.0" cy="70.4" rx="3.2" ry="3.3" fill="#2a0a05" opacity="0.63"/>
<ellipse cx="88.4" cy="15.3" rx="1.5" ry="1.8" fill="#1e0804" opacity="0.67"/>
<ellipse cx="47.9" cy="61.7" rx="4.6" ry="2.1" fill="#401409" opacity="0.61"/>
<ellipse cx="24.5" cy="34.9" rx="3.7" ry="1.7" fill="#3a1008" opacity="0.71"/>
<ellipse cx="141.4" cy="37.1" rx="3.1" ry="2.7" fill="#401409" opacity="0.65"/>
<ellipse cx="222.5" cy="71.2" rx="4.0" ry="3.9" fill="#3a1008" opacity="0.54"/>
<ellipse cx="212.2" cy="38.3" rx="3.2" ry="2.9" fill="#1e0804" opacity="0.77"/>
<ellipse cx="238.2" cy="68.9" rx="3.7" ry="4.9" fill="#2a0a05" opacity="0.75"/>
<ellipse cx="61.6" cy="67.5" rx="2.6" ry="3.8" fill="#1e0804" opacity="0.60"/>
<ellipse cx="249.8" cy="49.6" rx="3.6" ry="2.1" fill="#401409" opacity="0.60"/>
<ellipse cx="173.7" cy="54.5" rx="2.7" ry="2.5" fill="#1e0804" opacity="0.51"/>
<ellipse cx="80.0" cy="26.6" rx="2.7" ry="3.0" fill="#3a1008" opacity="0.59"/>
<ellipse cx="21.3" cy="7.6" rx="2.1" ry="2.1" fill="#2a0a05" opacity="0.80"/>
<ellipse cx="277.3" cy="40.1" rx="2.6" ry="2.7" fill="#1e0804" opacity="0.61"/>
<ellipse cx="184.6" cy="18.8" rx="2.9" ry="3.2" fill="#3a1008" opacity="0.71"/>
<ellipse cx="161.9" cy="8.6" rx="1.4" ry="2.4" fill="#1e0804" opacity="0.60"/>
<ellipse cx="175.8" cy="43.8" rx="2.2" ry="1.8" fill="#2a0a05" opacity="0.55"/>
<ellipse cx="213.4" cy="16.1" rx="2.5" ry="2.5" fill="#1e0804" opacity="0.76"/>
<ellipse cx="28.1" cy="36.6" rx="2.0" ry="3.0" fill="#3a1008" opacity="0.70"/>
<ellipse cx="250.9" cy="41.0" rx="2.8" ry="1.9" fill="#3a1008" opacity="0.69"/>
<ellipse cx="170.7" cy="67.6" rx="3.8" ry="3.5" fill="#3a1008" opacity="0.72"/>
<ellipse cx="114.6" cy="19.2" rx="2.6" ry="2.0" fill="#2a0a05" opacity="0.65"/>
<ellipse cx="277.8" cy="47.6" rx="2.9" ry="2.9" fill="#401409" opacity="0.79"/>
<ellipse cx="91.7" cy="23.8" rx="2.9" ry="2.7" fill="#401409" opacity="0.54"/>
<ellipse cx="202.9" cy="69.1" rx="4.3" ry="4.1" fill="#2a0a05" opacity="0.57"/>
<ellipse cx="226.8" cy="41.3" rx="3.9" ry="2.4" fill="#401409" opacity="0.85"/>
<ellipse cx="95.3" cy="26.6" rx="1.7" ry="2.8" fill="#2a0a05" opacity="0.74"/>
<ellipse cx="144.8" cy="5.6" rx="2.5" ry="2.6" fill="#401409" opacity="0.76"/>
<ellipse cx="97.1" cy="16.6" rx="1.9" ry="3.1" fill="#3a1008" opacity="0.53"/>
<ellipse cx="186.1" cy="71.1" rx="3.0" ry="2.2" fill="#401409" opacity="0.82"/>
<ellipse cx="166.6" cy="16.5" rx="2.4" ry="3.0" fill="#3a1008" opacity="0.50"/>
<ellipse cx="124.0" cy="14.5" rx="2.8" ry="2.5" fill="#1e0804" opacity="0.67"/>
<ellipse cx="138.6" cy="34.3" rx="1.7" ry="3.5" fill="#3a1008" opacity="0.70"/>
<ellipse cx="148.1" cy="60.1" rx="3.5" ry="3.7" fill="#1e0804" opacity="0.79"/>
<ellipse cx="27.1" cy="8.0" rx="2.6" ry="2.5" fill="#2a0a05" opacity="0.69"/>
<ellipse cx="66.5" cy="31.3" rx="1.5" ry="2.0" fill="#1e0804" opacity="0.54"/>
<circle cx="214.9" cy="49.5" r="1.6" fill="#d2a83a" opacity=".8"/>
<circle cx="62.2" cy="60.3" r="1.9" fill="#b88424" opacity=".8"/>
<circle cx="59.0" cy="61.7" r="2.5" fill="#c8962c" opacity=".8"/>
<circle cx="248.0" cy="11.1" r="1.2" fill="#b88424" opacity=".8"/>
<circle cx="133.2" cy="48.1" r="1.4" fill="#b88424" opacity=".8"/>
<circle cx="134.9" cy="3.0" r="0.6" fill="#b88424" opacity=".8"/>
<circle cx="120.2" cy="60.3" r="1.3" fill="#d2a83a" opacity=".8"/>
<circle cx="48.8" cy="35.1" r="1.7" fill="#d2a83a" opacity=".8"/>
<circle cx="275.6" cy="28.4" r="1.7" fill="#b88424" opacity=".8"/>
<circle cx="195.5" cy="13.9" r="1.1" fill="#c8962c" opacity=".8"/>
<circle cx="137.7" cy="56.6" r="1.2" fill="#b88424" opacity=".8"/>
<circle cx="266.2" cy="42.5" r="2.1" fill="#c8962c" opacity=".8"/>
<circle cx="273.4" cy="68.4" r="2.6" fill="#c8962c" opacity=".8"/>
<circle cx="146.8" cy="19.4" r="1.5" fill="#d2a83a" opacity=".8"/>
<circle cx="15.7" cy="28.8" r="1.7" fill="#c8962c" opacity=".8"/>
<circle cx="185.2" cy="58.3" r="2.1" fill="#c8962c" opacity=".8"/>
<circle cx="130.4" cy="38.2" r="1.2" fill="#b88424" opacity=".8"/>
<circle cx="103.4" cy="56.4" r="2.0" fill="#d2a83a" opacity=".8"/>
<circle cx="265.6" cy="5.3" r="0.9" fill="#c8962c" opacity=".8"/>
<circle cx="104.1" cy="38.0" r="0.9" fill="#d2a83a" opacity=".8"/>
<circle cx="206.1" cy="39.9" r="1.3" fill="#b88424" opacity=".8"/>
<circle cx="192.9" cy="41.0" r="2.1" fill="#d2a83a" opacity=".8"/>
<circle cx="198.4" cy="27.2" r="1.6" fill="#c8962c" opacity=".8"/>
<circle cx="168.1" cy="22.5" r="1.4" fill="#d2a83a" opacity=".8"/>
<circle cx="231.9" cy="17.0" r="1.1" fill="#d2a83a" opacity=".8"/>
<circle cx="267.2" cy="5.2" r="0.7" fill="#d2a83a" opacity=".8"/>
<circle cx="120.4" cy="26.0" r="1.8" fill="#c8962c" opacity=".8"/>
<circle cx="28.3" cy="17.6" r="0.9" fill="#c8962c" opacity=".8"/>
<circle cx="273.1" cy="7.7" r="0.7" fill="#d2a83a" opacity=".8"/>
<circle cx="174.2" cy="10.6" r="1.4" fill="#b88424" opacity=".8"/>
<circle cx="170.0" cy="19.3" r="1.3" fill="#d2a83a" opacity=".8"/>
<circle cx="177.9" cy="9.7" r="0.9" fill="#d2a83a" opacity=".8"/>
<circle cx="122.5" cy="54.4" r="1.9" fill="#c8962c" opacity=".8"/>
<circle cx="36.2" cy="62.8" r="1.7" fill="#c8962c" opacity=".8"/>
<circle cx="141.6" cy="20.1" r="0.9" fill="#d2a83a" opacity=".8"/>
<circle cx="118.0" cy="61.8" r="2.0" fill="#d2a83a" opacity=".8"/>
<circle cx="194.9" cy="7.1" r="0.9" fill="#b88424" opacity=".8"/>
<circle cx="110.1" cy="6.1" r="1.2" fill="#b88424" opacity=".8"/>
<circle cx="252.6" cy="45.9" r="1.5" fill="#b88424" opacity=".8"/>
<circle cx="247.9" cy="23.6" r="0.8" fill="#b88424" opacity=".8"/>
<circle cx="139.7" cy="15.4" r="1.1" fill="#c8962c" opacity=".8"/>
<circle cx="180.2" cy="23.5" r="1.0" fill="#b88424" opacity=".8"/>
<circle cx="124.0" cy="2.6" r="0.7" fill="#c8962c" opacity=".8"/>
<circle cx="114.3" cy="42.1" r="2.0" fill="#d2a83a" opacity=".8"/>
<circle cx="249.3" cy="12.9" r="1.5" fill="#d2a83a" opacity=".8"/>
<path d="M68.4 16.2L77.2 10.4" stroke="#c9a890" stroke-width="1.300" opacity=".7"/>
<path d="M73.1 30.1L77.0 23.5" stroke="#c9a890" stroke-width="1.300" opacity=".7"/>
<path d="M269.0 4.8L264.4 1.1" stroke="#c9a890" stroke-width="1.300" opacity=".7"/>
<path d="M54.8 47.8L64.0 42.0" stroke="#c9a890" stroke-width="1.300" opacity=".7"/>
<path d="M111.4 63.1L106.3 56.2" stroke="#c9a890" stroke-width="1.300" opacity=".7"/>
<path d="M37.0 28.7L41.0 20.4" stroke="#c9a890" stroke-width="1.300" opacity=".7"/>
<path d="M278.4 67.2L285.9 62.4" stroke="#c9a890" stroke-width="1.300" opacity=".7"/>
<path d="M277.9 57.3L285.4 51.8" stroke="#c9a890" stroke-width="1.300" opacity=".7"/>
<path d="M260.3 37.9L265.4 36.0" stroke="#c9a890" stroke-width="1.300" opacity=".7"/>
<path d="M199.4 60.9L204.3 57.6" stroke="#c9a890" stroke-width="1.300" opacity=".7"/>
<path d="M120.3 31.2L117.1 25.7" stroke="#c9a890" stroke-width="1.300" opacity=".7"/>
<path d="M204.0 29.2L209.6 23.6" stroke="#c9a890" stroke-width="1.300" opacity=".7"/>
<path d="M91.5 29.1L81.9 24.3" stroke="#c9a890" stroke-width="1.300" opacity=".7"/>
<path d="M188.4 53.5L185.8 46.9" stroke="#c9a890" stroke-width="1.300" opacity=".7"/>
<path d="M19.8 39.3L25.4 34.6" stroke="#c9a890" stroke-width="1.300" opacity=".7"/>
<path d="M241.5 46.3L250.7 41.5" stroke="#c9a890" stroke-width="1.300" opacity=".7"/>
<path d="M110.1 13.1L101.7 8.0" stroke="#c9a890" stroke-width="1.300" opacity=".7"/>
<path d="M251.1 37.1L243.8 31.8" stroke="#c9a890" stroke-width="1.300" opacity=".7"/>
<path d="M152.8 38.1L150.4 31.8" stroke="#c9a890" stroke-width="1.300" opacity=".7"/>
<path d="M196.0 18.7L188.8 13.0" stroke="#c9a890" stroke-width="1.300" opacity=".7"/>
<path d="M188.6 25.6L197.3 21.3" stroke="#c9a890" stroke-width="1.300" opacity=".7"/>
<path d="M83.5 11.8L89.9 9.0" stroke="#c9a890" stroke-width="1.300" opacity=".7"/>
<path d="M279.8 31.3L276.9 25.5" stroke="#c9a890" stroke-width="1.300" opacity=".7"/>
<path d="M68.6 19.6L72.9 12.8" stroke="#c9a890" stroke-width="1.300" opacity=".7"/>
<path d="M111.7 9.3L106.9 6.0" stroke="#c9a890" stroke-width="1.300" opacity=".7"/>
<path d="M257.2 71.0L265.1 66.6" stroke="#c9a890" stroke-width="1.300" opacity=".7"/>
<path d="M95.2 52.7L91.2 46.2" stroke="#c9a890" stroke-width="1.300" opacity=".7"/>
<path d="M197.4 49.3L202.0 43.9" stroke="#c9a890" stroke-width="1.300" opacity=".7"/>
<path d="M269.4 4.6L274.0 -0.2" stroke="#c9a890" stroke-width="1.300" opacity=".7"/>
<path d="M244.7 14.2L248.2 9.8" stroke="#c9a890" stroke-width="1.300" opacity=".7"/>
<!-- front-row big figures -->
<ellipse cx="118" cy="52" rx="15" ry="11" fill="#b0653a" opacity=".85"/>
<ellipse cx="104" cy="44" rx="6" ry="7" fill="#b86a38" opacity=".9"/>
<ellipse cx="106" cy="40" rx="5" ry="3" fill="#d0a030" opacity=".9"/>
<ellipse cx="176" cy="62" rx="9" ry="10" fill="#3a1409" opacity=".8"/>
<ellipse cx="176" cy="54" rx="5" ry="5" fill="#c89a30" opacity=".9"/>
<ellipse cx="212" cy="60" rx="10" ry="8" fill="#9c4a24" opacity=".8"/>
<ellipse cx="245" cy="64" rx="11" ry="8" fill="#a4502a" opacity=".8"/>
<ellipse cx="60" cy="60" rx="10" ry="8" fill="#8a3a1c" opacity=".8"/>
<ellipse cx="30" cy="56" rx="9" ry="8" fill="#7c3218" opacity=".8"/>
</g>
<!-- wet sand band -->
<path d="M0 68C30 64 55 76 85 78S130 74 160 77 215 79 240 83 270 85 281 83V112H0z" fill="#4e281b" filter="url(#fb2)"/>
<path d="M0 80C40 78 90 87 140 86S230 94 281 98" fill="none" stroke="#86665a" stroke-width="2.500" opacity=".55" filter="url(#fb2)"/>
<!-- sand -->
<path d="M0 89C30 88 60 92 90 92S150 90 190 93 250 104 281 105V158H0z" fill="url(#fg2)"/>
<!-- shadows on sand -->
<g clip-path="url(#fsand)"><g fill="#8c410f" filter="url(#fd1)">
<path d="M0 80H120L128 100 110 112 60 130 48 128 40 138 30 132 18 150 10 148 0 158z"/>
<path d="M118 80H290V150L272 140 262 148 255 132 240 128 228 136 222 124 205 126 198 114 180 116 172 104 150 108 136 100z"/>
<path d="M194 146h22l-2 12h-18z" opacity=".6"/>
</g></g>
<!-- light sand patches -->
<g fill="#be8536" filter="url(#fb2)">
<path d="M100 120L140 108 175 112 200 124 225 134 250 140 262 158H40z" opacity=".75"/>
<path d="M2 140L14 128 26 134 40 130 44 158H2z" opacity=".8"/>
</g>
<!-- foam line -->
<path d="M0 89C30 88 60 92 90 92S150 90 190 93 250 104 281 105" fill="none" stroke="#c9a080" stroke-width="1.600" opacity=".75" filter="url(#fb1)"/>
<!-- Obelix -->
<g filter="url(#fb0)">
<path d="M52 128c-2-14 4-26 12-32l8 6-2 40c-8 4-16-2-18-14z" fill="#3a66a4"/>
<path d="M55 112c-3 10-3 22 1 32M59 106c-3 12-3 26 2 38" stroke="#d0ccd4" stroke-width="1.400" fill="none"/>
<path d="M64 134c4 10 12 16 22 12l-4 8H70z" fill="#1e2a3c"/>
<path d="M62 106c4-10 12-14 22-10 6 4 6 14 4 26-2 12-10 22-18 20-8-4-12-22-8-36z" fill="#94401a"/>
<path d="M61 107c2 8 6 16 10 20l-4 4c-4-6-8-14-6-24z" fill="#1c4a38"/>
<ellipse cx="88" cy="126" rx="12" ry="5.500" fill="#a84e1a" transform="rotate(-8 88 126)"/>
<path d="M57 104c2-8 8-10 14-9l-3 6c-4 0-7 2-8 6z" fill="#c08a42"/>
<ellipse cx="81" cy="97" rx="6" ry="5.500" fill="#a0522a"/>
<ellipse cx="83" cy="91.500" rx="4.500" ry="2.800" fill="#b8a8a8"/>
<path d="M88 95c2 4 2 10 0 16" stroke="#b06830" stroke-width="2" fill="none"/>
<path d="M68 150c3 3 10 2 12-3" stroke="#c8c8d0" stroke-width="3" fill="none"/>
</g>
<!-- dog -->
<g fill="#d8cfd0" filter="url(#fb0)"><ellipse cx="39" cy="143" rx="3" ry="7" transform="rotate(-20 39 143)"/><circle cx="40" cy="135" r="2.500"/></g>
<!-- Asterix -->
<g filter="url(#fb0)">
<path d="M206 110.500L216 93M212 110.500L228 99" stroke="#e0d0c8" stroke-width="2.200" fill="none" stroke-linecap="round"/>
<ellipse cx="207" cy="114" rx="5.500" ry="5.500" fill="#a85830"/>
<ellipse cx="200" cy="111" rx="2.500" ry="3.500" fill="#d8c090"/>
<ellipse cx="203" cy="127" rx="6.500" ry="7" fill="#1c1c1c"/>
<path d="M200 133l-3 12 4 1M207 133l8 9 2-2" stroke="#b02818" stroke-width="3.500" fill="none" stroke-linecap="round"/>
<ellipse cx="192" cy="142" rx="2" ry="3" fill="#d8b020"/>
</g>
<rect width="281" height="158" fill="url(#fvig)"/>
<rect width="281" height="90" fill="url(#fleft)"/>
</g>
<text x="141" y="88" text-anchor="middle" font-family="'DejaVu Sans','Liberation Sans',sans-serif" font-weight="700" font-size="32" fill="#fff">Films</text>
</svg>
</div>
<div class="card" style="left:640px;top:166px;background:#44b8e0">
<svg class="big" viewBox="0 0 24 24"><path fill-rule="evenodd" d="M20 2H8c-1.100 0-2 .9-2 2v12c0 1.100.9 2 2 2h12c1.100 0 2-.9 2-2V4c0-1.100-.9-2-2-2zm-2 5h-3v5.500c0 1.380-1.120 2.500-2.500 2.500S10 13.880 10 12.500s1.120-2.500 2.500-2.500c.57 0 1.080.19 1.500.51V5h4v2zM4 6H2v14c0 1.100.9 2 2 2h14v-2H4V6z"/></svg>
</div>
<div class="lbl" style="left:42px;top:332px">Émissions</div>
<div class="lbl" style="left:341px;top:332px">Films</div>
<div class="lbl" style="left:640px;top:332px;letter-spacing:.05px">Musique</div>

<h2 class="sec" style="top:392px;left:42.600px;letter-spacing:0">Continuer à regarder</h2>
<div class="card" id="home" style="left:42px;top:432px;background:#4a4c5c">
<svg class="abs" style="left:0;top:0" width="281" height="158" viewBox="0 0 281 158">
<defs>
<filter id="hn1" x="0" y="0" width="100%" height="100%"><feTurbulence type="fractalNoise" baseFrequency=".12 .15" numOctaves="3" seed="11"/><feColorMatrix type="matrix" values="0 0 0 0 .85  0 0 0 0 .85  0 0 0 0 .95  3 0 0 0 -1.550"/></filter>
<filter id="hn2" x="0" y="0" width="100%" height="100%"><feTurbulence type="fractalNoise" baseFrequency=".1 .12" numOctaves="3" seed="23"/><feColorMatrix type="matrix" values="0 0 0 0 .03  0 0 0 0 .03  0 0 0 0 .08  0 3 0 0 -1.500"/></filter>
<filter id="hb1" x="-10%" y="-10%" width="120%" height="120%"><feGaussianBlur stdDeviation=".7"/></filter>
<filter id="hd1" x="-5%" y="-5%" width="110%" height="110%"><feTurbulence type="fractalNoise" baseFrequency=".07" numOctaves="2" seed="4" result="t"/><feDisplacementMap in="SourceGraphic" in2="t" scale="9" xChannelSelector="R" yChannelSelector="G"/><feGaussianBlur stdDeviation=".6"/></filter>
<filter id="hb3" x="-10%" y="-10%" width="120%" height="120%"><feGaussianBlur stdDeviation="7"/></filter>
<clipPath id="hc"><rect width="281" height="158"/></clipPath>
</defs>
<g clip-path="url(#hc)">
<rect width="281" height="158" fill="#5c5c6e"/>
<g filter="url(#hb3)">
<rect x="-0.5" y="-0.5" width="41.1" height="23.6" fill="#4c4c56"/>
<rect x="39.6" y="-0.5" width="41.1" height="23.6" fill="#70707c"/>
<rect x="79.8" y="-0.5" width="41.1" height="23.6" fill="#606070"/>
<rect x="119.9" y="-0.5" width="41.1" height="23.6" fill="#7a7a8c"/>
<rect x="160.1" y="-0.5" width="41.1" height="23.6" fill="#6c6c84"/>
<rect x="200.2" y="-0.5" width="41.1" height="23.6" fill="#70708a"/>
<rect x="240.4" y="-0.5" width="41.1" height="23.6" fill="#4c4c60"/>
<rect x="-0.5" y="22.1" width="41.1" height="23.6" fill="#6c6c7c"/>
<rect x="39.6" y="22.1" width="41.1" height="23.6" fill="#68687a"/>
<rect x="79.8" y="22.1" width="41.1" height="23.6" fill="#78788a"/>
<rect x="119.9" y="22.1" width="41.1" height="23.6" fill="#8c8c9e"/>
<rect x="160.1" y="22.1" width="41.1" height="23.6" fill="#686880"/>
<rect x="200.2" y="22.1" width="41.1" height="23.6" fill="#747490"/>
<rect x="240.4" y="22.1" width="41.1" height="23.6" fill="#54546a"/>
<rect x="-0.5" y="44.6" width="41.1" height="23.6" fill="#5c5c6a"/>
<rect x="39.6" y="44.6" width="41.1" height="23.6" fill="#6c6c7c"/>
<rect x="79.8" y="44.6" width="41.1" height="23.6" fill="#70707e"/>
<rect x="119.9" y="44.6" width="41.1" height="23.6" fill="#787888"/>
<rect x="160.1" y="44.6" width="41.1" height="23.6" fill="#84849c"/>
<rect x="200.2" y="44.6" width="41.1" height="23.6" fill="#88889e"/>
<rect x="240.4" y="44.6" width="41.1" height="23.6" fill="#70708a"/>
<rect x="-0.5" y="67.2" width="41.1" height="23.6" fill="#444452"/>
<rect x="39.6" y="67.2" width="41.1" height="23.6" fill="#484856"/>
<rect x="79.8" y="67.2" width="41.1" height="23.6" fill="#50505e"/>
<rect x="119.9" y="67.2" width="41.1" height="23.6" fill="#686878"/>
<rect x="160.1" y="67.2" width="41.1" height="23.6" fill="#545468"/>
<rect x="200.2" y="67.2" width="41.1" height="23.6" fill="#6c6c84"/>
<rect x="240.4" y="67.2" width="41.1" height="23.6" fill="#606078"/>
<rect x="-0.5" y="89.8" width="41.1" height="23.6" fill="#444454"/>
<rect x="39.6" y="89.8" width="41.1" height="23.6" fill="#4c4c5a"/>
<rect x="79.8" y="89.8" width="41.1" height="23.6" fill="#6c6c7a"/>
<rect x="119.9" y="89.8" width="41.1" height="23.6" fill="#7c7c8c"/>
<rect x="160.1" y="89.8" width="41.1" height="23.6" fill="#30303e"/>
<rect x="200.2" y="89.8" width="41.1" height="23.6" fill="#38384c"/>
<rect x="240.4" y="89.8" width="41.1" height="23.6" fill="#64647e"/>
<rect x="-0.5" y="112.4" width="41.1" height="23.6" fill="#464654"/>
<rect x="39.6" y="112.4" width="41.1" height="23.6" fill="#84849a"/>
<rect x="79.8" y="112.4" width="41.1" height="23.6" fill="#9c9cb0"/>
<rect x="119.9" y="112.4" width="41.1" height="23.6" fill="#68687a"/>
<rect x="160.1" y="112.4" width="41.1" height="23.6" fill="#202030"/>
<rect x="200.2" y="112.4" width="41.1" height="23.6" fill="#1c1c2c"/>
<rect x="240.4" y="112.4" width="41.1" height="23.6" fill="#484860"/>
<rect x="-0.5" y="134.9" width="41.1" height="23.6" fill="#3c3c48"/>
<rect x="39.6" y="134.9" width="41.1" height="23.6" fill="#6c6c7c"/>
<rect x="79.8" y="134.9" width="41.1" height="23.6" fill="#6c6c7c"/>
<rect x="119.9" y="134.9" width="41.1" height="23.6" fill="#40404e"/>
<rect x="160.1" y="134.9" width="41.1" height="23.6" fill="#303044"/>
<rect x="200.2" y="134.9" width="41.1" height="23.6" fill="#2c2c40"/>
<rect x="240.4" y="134.9" width="41.1" height="23.6" fill="#3c3c54"/>
</g>
<!-- texture -->
<rect width="281" height="158" filter="url(#hn1)" opacity=".8"/>
<rect width="281" height="158" filter="url(#hn2)" opacity=".9"/>
<!-- light regions -->
<g fill="#aeaec6" filter="url(#hd1)">
<path d="M111 10.600L141 6.400 149 35 171 42.600 162 55 132 68 112 64 118.500 40.500 111 21z" opacity=".92"/>
<path d="M40.500 120.500L94 103.500 126 93 131 112 124 128 98 140 59.600 151.400 42.600 152.500 39.400 132z" fill="#a8a8be" opacity=".92"/>
<path d="M52 54L74 50 78 79 60 88 50 74z" opacity=".7"/>
<path d="M214.600 51L243.400 49 245 72 222 74.500z" opacity=".85"/>
<path d="M262.500 35L276.400 35 277 50 264 50z" opacity=".8"/>
<path d="M232.700 87.500L281.700 79V126H254L247.600 111 238 95z" fill="#9898b8" opacity=".95"/>
<path d="M118.500 82L153.600 80 150 97 122 98z" opacity=".8"/>
<path d="M64 79L81 79 84 89 66 90z" opacity=".75"/>
<path d="M4 88.600L20 88 21 100 5 100z" opacity=".75"/>
<path d="M31 130L40.500 130V153.500H31z" opacity=".7"/>
<path d="M0 122L13 123 14 153H0z" fill="#8a8aa0" opacity=".7"/>
<path d="M72 30L100 28 120 78 96 79 84 56z" fill="#8c8ca2" opacity=".55"/>
<path d="M31 3L45 3 76 47 62 50z" fill="#b0b0c6" opacity=".5"/>
</g>
<!-- road -->
<path d="M0 123.700L36 115 93.700 97 129 79 170.700 57.500" stroke="#5e5e74" stroke-width="5" fill="none" filter="url(#hb1)"/>
<path d="M0 121L36 112.300 93.700 94.300 129 76.300 170.700 54.800" stroke="#d0d0e4" stroke-width=".8" fill="none" opacity=".55"/>
<path d="M94 101L126 92 138.700 98 147 113" stroke="#62627a" stroke-width="4" fill="none" filter="url(#hb1)"/>
<!-- dark regions -->
<g fill="#0b0b1a" filter="url(#hd1)">
<path d="M129 115L144 117 149.400 134.400 162 121.600 185.600 134.400 200.800 141.800 214.600 130 230.600 130 252 127 269 152.500 281 153.500H132.300L130 132z"/>
<path d="M153.600 89.600L170 84 207 84 232.700 87.500 238 95 247.600 111 254 126 252 127 230 131 200 142 185.600 134.400 162 121.600 156 108z"/>
<ellipse cx="253.500" cy="94" rx="12" ry="11.500"/>
<path d="M31 79L44.700 79 46 112 33 114z"/>
<path d="M44 82L81 81 78 100 60 107 46 106z" opacity=".85"/>
<path d="M81 79L94 79 94 87.500 84 88z" opacity=".9"/>
<path d="M12.800 123.700L31 121 31 153.500H12z"/>
<path d="M0 102L21 102 20 114 0 116z" opacity=".9"/>
<path d="M11 47L31 47 31 65 12 65z" opacity=".8"/>
<path d="M28 61L47 61 47 79H29z" opacity=".9"/>
<path d="M51 22L64 24 71 46 58 44z" opacity=".75"/>
<path d="M0 30L10 30 10 57 0 57z" opacity=".7"/>
<ellipse cx="143.500" cy="26" rx="6" ry="11.500" transform="rotate(-15 143.500 26)"/>
<ellipse cx="130" cy="10" rx="8" ry="5.500"/>
<circle cx="114" cy="17.500" r="3.300"/>
<circle cx="129.700" cy="34.600" r="5.800"/>
<circle cx="126.500" cy="52" r="6.500"/>
<ellipse cx="147" cy="59" rx="10" ry="5.500" transform="rotate(-20 147 59)"/>
<ellipse cx="121" cy="69" rx="9" ry="6"/>
<path d="M70 2L86 33" stroke="#0b0b1a" stroke-width="2.500" fill="none"/>
<path d="M64 0L78 0 76 10 66 9z" opacity=".8"/>
<path d="M94 14L108 14 108 32 95 32z" opacity=".55"/>
<path d="M83 70L100 70 100 79H84z"/>
<path d="M61 43.500L71 43.500 71 56.500 61 56.500z" opacity=".6"/>
<circle cx="182" cy="21" r="5.500"/><circle cx="173" cy="32.500" r="4.500"/><circle cx="190.500" cy="26" r="4"/>
<path d="M261.500 6.400L282 4V35L266 33z"/>
<path d="M276 35L282 35 282 79 277 70z" opacity=".8"/>
<path d="M209 45L219 45 219 55 210 55z"/>
<path d="M247.600 51L258 51 258 57.500 248 57.500z"/>
<path d="M194 60L223 60 221 79 194 79z" opacity=".8"/>
<path d="M250 62L282 60 282 79 250 79z" opacity=".55"/>
<path d="M0 0L28 0 25 6.500 13 14 0 25z" fill="#3c3432"/>
<path d="M94 79L118.500 79 118.500 96 94 100z" fill="#2c2c3c" opacity=".8"/>
<path d="M94 124L118.500 124 112 153.500 94 153.500z" fill="#34344a" opacity=".8"/>
<path d="M57.500 141L94 138.600 94 153.500 57.500 153.500z" fill="#2a2a3c" opacity=".55"/>
<ellipse cx="40.5" cy="70.8" rx="5.1" ry="2.5" transform="rotate(121 40.5 70.8)" opacity="0.56"/>
<ellipse cx="205.0" cy="76.7" rx="3.8" ry="4.4" transform="rotate(174 205.0 76.7)" opacity="0.65"/>
<ellipse cx="241.9" cy="5.6" rx="3.9" ry="3.8" transform="rotate(22 241.9 5.6)" opacity="0.48"/>
<ellipse cx="211.9" cy="79.9" rx="3.2" ry="4.0" transform="rotate(41 211.9 79.9)" opacity="0.69"/>
<ellipse cx="149.8" cy="14.2" rx="4.3" ry="3.7" transform="rotate(137 149.8 14.2)" opacity="0.65"/>
<ellipse cx="32.7" cy="48.4" rx="4.5" ry="3.1" transform="rotate(149 32.7 48.4)" opacity="0.48"/>
<ellipse cx="271.2" cy="66.4" rx="4.7" ry="2.4" transform="rotate(1 271.2 66.4)" opacity="0.79"/>
<ellipse cx="92.7" cy="70.0" rx="5.1" ry="4.4" transform="rotate(95 92.7 70.0)" opacity="0.58"/>
<ellipse cx="49.4" cy="66.1" rx="3.1" ry="3.8" transform="rotate(84 49.4 66.1)" opacity="0.64"/>
<ellipse cx="247.7" cy="30.9" rx="4.4" ry="4.3" transform="rotate(144 247.7 30.9)" opacity="0.55"/>
<ellipse cx="223.3" cy="57.8" rx="4.8" ry="2.2" transform="rotate(105 223.3 57.8)" opacity="0.54"/>
<ellipse cx="82.7" cy="35.8" rx="3.8" ry="4.5" transform="rotate(42 82.7 35.8)" opacity="0.78"/>
<ellipse cx="248.1" cy="54.5" rx="2.3" ry="3.9" transform="rotate(73 248.1 54.5)" opacity="0.45"/>
<ellipse cx="249.9" cy="73.9" rx="3.6" ry="2.4" transform="rotate(22 249.9 73.9)" opacity="0.56"/>
<ellipse cx="276.9" cy="11.5" rx="5.0" ry="2.4" transform="rotate(161 276.9 11.5)" opacity="0.60"/>
<ellipse cx="62.6" cy="67.3" rx="5.4" ry="3.9" transform="rotate(126 62.6 67.3)" opacity="0.68"/>
<ellipse cx="54.5" cy="91.8" rx="4.3" ry="3.2" transform="rotate(103 54.5 91.8)" opacity="0.73"/>
<ellipse cx="71.6" cy="93.9" rx="4.5" ry="2.5" transform="rotate(5 71.6 93.9)" opacity="0.69"/>
<ellipse cx="107.2" cy="43.3" rx="2.4" ry="2.3" transform="rotate(157 107.2 43.3)" opacity="0.61"/>
<ellipse cx="153.4" cy="77.4" rx="2.5" ry="2.8" transform="rotate(60 153.4 77.4)" opacity="0.59"/>
<ellipse cx="261.4" cy="8.0" rx="2.3" ry="2.9" transform="rotate(118 261.4 8.0)" opacity="0.83"/>
<ellipse cx="181.4" cy="64.4" rx="3.9" ry="3.6" transform="rotate(1 181.4 64.4)" opacity="0.70"/>
<ellipse cx="72.1" cy="55.3" rx="2.6" ry="2.2" transform="rotate(52 72.1 55.3)" opacity="0.56"/>
<ellipse cx="45.2" cy="77.9" rx="2.4" ry="2.6" transform="rotate(38 45.2 77.9)" opacity="0.77"/>
<ellipse cx="4.9" cy="65.7" rx="4.1" ry="3.6" transform="rotate(103 4.9 65.7)" opacity="0.50"/>
<ellipse cx="200.8" cy="65.6" rx="4.1" ry="3.2" transform="rotate(106 200.8 65.6)" opacity="0.51"/>
<ellipse cx="30.2" cy="48.1" rx="2.5" ry="3.3" transform="rotate(1 30.2 48.1)" opacity="0.60"/>
<ellipse cx="250.3" cy="53.9" rx="4.3" ry="3.6" transform="rotate(0 250.3 53.9)" opacity="0.54"/>
<ellipse cx="135.0" cy="53.1" rx="2.6" ry="3.6" transform="rotate(90 135.0 53.1)" opacity="0.83"/>
<ellipse cx="77.8" cy="15.6" rx="3.2" ry="2.0" transform="rotate(60 77.8 15.6)" opacity="0.79"/>
<ellipse cx="53.8" cy="72.3" rx="4.5" ry="3.8" transform="rotate(5 53.8 72.3)" opacity="0.79"/>
<ellipse cx="200.4" cy="5.0" rx="4.5" ry="2.5" transform="rotate(164 200.4 5.0)" opacity="0.57"/>
<ellipse cx="20.2" cy="52.3" rx="4.8" ry="3.7" transform="rotate(131 20.2 52.3)" opacity="0.53"/>
<ellipse cx="26.4" cy="20.5" rx="2.1" ry="4.1" transform="rotate(47 26.4 20.5)" opacity="0.74"/>
<ellipse cx="186.3" cy="56.3" rx="2.3" ry="4.3" transform="rotate(68 186.3 56.3)" opacity="0.76"/>
<ellipse cx="72.3" cy="5.5" rx="3.3" ry="2.2" transform="rotate(36 72.3 5.5)" opacity="0.76"/>
<ellipse cx="195.9" cy="88.4" rx="5.2" ry="3.4" transform="rotate(45 195.9 88.4)" opacity="0.46"/>
<ellipse cx="14.9" cy="0.5" rx="4.3" ry="3.8" transform="rotate(33 14.9 0.5)" opacity="0.53"/>
<ellipse cx="40.0" cy="69.6" rx="4.4" ry="3.3" transform="rotate(81 40.0 69.6)" opacity="0.85"/>
<ellipse cx="168.4" cy="56.2" rx="2.8" ry="3.2" transform="rotate(69 168.4 56.2)" opacity="0.63"/>
<ellipse cx="132.4" cy="19.7" rx="3.6" ry="3.2" transform="rotate(108 132.4 19.7)" opacity="0.60"/>
<ellipse cx="52.6" cy="44.2" rx="2.3" ry="2.1" transform="rotate(16 52.6 44.2)" opacity="0.78"/>
<ellipse cx="19.7" cy="24.5" rx="4.9" ry="2.3" transform="rotate(70 19.7 24.5)" opacity="0.63"/>
<ellipse cx="59.8" cy="74.6" rx="3.4" ry="2.7" transform="rotate(101 59.8 74.6)" opacity="0.78"/>
<ellipse cx="144.4" cy="29.9" rx="2.5" ry="2.2" transform="rotate(11 144.4 29.9)" opacity="0.79"/>
<ellipse cx="93.4" cy="84.8" rx="5.2" ry="4.0" transform="rotate(116 93.4 84.8)" opacity="0.84"/>
</g>
<!-- light patches over dark -->
<g fill="#9c9cba" filter="url(#hd1)">
<path d="M144 115L164 117 149.400 134.400z"/>
<path d="M119.500 126L132.300 126V153.500H119.500z" opacity=".85"/>
<path d="M162 143L188 143 202 147 202 153.500 162 153.500z" opacity=".85"/>
<path d="M179 121.600L188 121.600 198.600 124 198.600 143 188 140z" opacity=".85"/>
<path d="M210 98L220 98 220 110z"/>
<path d="M188 87.500L207 86 207 100 190 100z" opacity=".7"/>
<path d="M207 79L239 79 236 89 210 90z" opacity=".6"/>
<path d="M214.600 130L230.600 130 226 147z" opacity=".9"/>
<path d="M266.800 132L281.700 132V153.500H270z" opacity=".8"/>
</g>
<circle cx="276" cy="145" r="4.500" fill="none" stroke="#0b0b1a" stroke-width="2.500"/>
<g filter="url(#hb1)">
<path d="M130.1 37.3L133.2 42.9M252.4 8.1L257.8 17.1M11.5 37.9L3.1 46.5M66.9 11.1L69.5 20.8M107.8 74.6L105.4 80.1M118.5 8.8L114.7 15.4M56.1 88.6L51.0 101.5M6.6 42.5L-0.2 54.8M57.1 0.8L60.3 5.7M4.9 8.5L8.0 17.9M179.5 9.3L179.0 20.1M15.2 55.5L9.8 65.1M280.4 12.1L278.2 24.0M66.5 61.1L70.2 65.1M217.7 8.7L220.0 16.8M164.1 45.1L159.1 52.6M224.6 32.9L228.8 41.2M25.0 63.0L26.7 68.7M7.1 78.1L-0.6 88.6M207.3 42.5L209.5 49.5M241.6 36.9L233.6 45.4M14.2 97.5L18.3 102.8M277.1 60.7L279.0 65.4M99.6 14.1L90.9 20.2M195.6 6.6L199.1 15.4M214.7 38.3L219.5 51.3M247.4 49.4L244.8 54.8M176.9 8.4L167.6 17.2M128.3 55.9L129.1 64.8M8.1 99.3L14.3 111.8M147.1 53.7L150.3 67.4M84.4 72.5L78.3 83.0M137.8 63.7L141.5 67.7M104.9 87.9L107.4 94.7M246.1 3.6L254.3 10.9M190.5 40.7L185.7 43.7M18.2 35.5L23.5 43.6M93.8 78.3L96.4 82.7M29.9 34.9L26.8 41.5M31.1 12.0L35.5 25.7M131.4 52.2L135.9 59.6M66.4 25.6L70.7 34.8M6.2 10.3L-1.4 20.9M170.1 22.1L167.6 27.1M274.1 78.6L276.2 92.5M271.9 9.4L275.9 16.6M97.5 83.7L92.6 91.3M171.5 56.8L167.8 65.5M47.9 54.4L50.7 60.7M185.1 13.8L191.9 22.8M206.1 21.1L209.4 31.0M5.4 55.2L9.1 64.2M144.5 9.9L138.5 20.5M3.0 92.1L-0.5 96.2M182.4 39.5L188.3 52.1M37.9 69.0L42.3 76.4M51.3 61.3L55.7 74.2M2.7 68.4L6.9 71.4M255.2 75.5L253.7 83.0M65.2 33.1L70.3 44.5M168.9 54.5L174.2 67.8M188.0 9.7L188.0 16.0M60.9 20.3L68.0 29.7M263.1 71.6L264.6 81.4M130.3 63.2L135.6 76.9M23.9 35.5L26.0 49.2M151.7 67.0L158.6 80.1M163.3 20.0L153.7 29.3M10.1 40.6L15.0 52.4M271.1 4.2L265.6 8.2M187.5 52.3L190.7 62.6M42.7 37.9L53.6 47.6M80.2 48.2L78.3 54.7M271.0 52.0L277.0 56.6M3.9 19.8L8.2 23.4M87.5 85.2L83.2 90.7M87.2 22.6L92.4 27.0M179.4 32.3L190.6 41.0M8.2 74.2L11.5 80.5" stroke="#eaeafa" stroke-width="1.200" fill="none" opacity=".75" stroke-linecap="round"/>
<path d="M99.9 126.9l-2.9 -8.8M51.7 139.4l-2.6 -7.3M50.5 134.6l-3.0 -7.9M73.7 137.8l-2.2 -10.9M85.2 146.2l-3.9 -7.2M69.8 130.5l-3.4 -8.2M86.5 140.9l-3.8 -7.7M108.4 138.5l-3.6 -11.4M80.4 116.3l-2.1 -10.6M118.5 120.6l-2.7 -8.2M95.0 129.2l-4.0 -10.4M75.6 148.0l-2.1 -7.3M120.5 120.1l-3.9 -11.2M46.6 118.3l-2.8 -11.8M92.4 127.7l-3.5 -7.2M60.2 145.8l-2.9 -9.0" stroke="#f0f0fc" stroke-width="1.500" fill="none" opacity=".9" stroke-linecap="round"/>
</g>
<!-- thin light lines -->
<g stroke="#b4baea" stroke-width="1.100" fill="none" filter="url(#hb1)" opacity=".95">
<path d="M200.800 141.800C218 136 236 130 252 127L281.700 129"/>
<path d="M252 127L269 152.500"/>
<path d="M132 111L160 83"/>
<path d="M110 153.500L124 123.700"/>
<path d="M57 153L94 138"/>
<path d="M5 8C12 16 22 14 27 2" stroke="#d8c8d0"/>
</g>
</g>
</svg>
</div>
<div class="abs" style="left:42px;top:586px;width:281px;height:4px;background:#2e2e2e"></div>
<div class="abs" style="left:42px;top:586px;width:41px;height:4px;background:#00a4dc"></div>
<div class="lbl" style="left:42px;top:598px">HOME (FR) - Free movie</div>
</div>
<div id="sb" class="abs"></div>
<div id="sbthumb" class="abs"></div>
<div id="bl" class="abs"></div>
<div id="br" class="abs"></div>
<div id="bb" class="abs"></div>
<div id="wm" class="abs">InformatiWeb-Pro.net</div>
<svg class="abs" style="left:1263px;top:710px" width="33" height="31" viewBox="0 0 33 31">
<defs><linearGradient id="lp1" x1="0" y1="0" x2="1" y2="1"><stop offset="0" stop-color="#2a50e0"/><stop offset=".5" stop-color="#1630b8"/><stop offset="1" stop-color="#2448d0"/></linearGradient></defs>
<path d="M14 2L33 2 31 19 16 16z" fill="#3a3f58"/>
<path d="M15.500 3L32 3 30.500 17.500 17 15z" fill="url(#lp1)"/>
<path d="M21 5l4 4 4-5-2 6 3 4-5-2-4 3 2-5z" fill="#4a78f0" opacity=".7"/>
<path d="M2 21L16 16 31 19 21 30z" fill="#6e6e72"/>
<path d="M6 21L16 17.500 27 19.500 19 26z" fill="#4c4c50"/>
<path d="M2 21L21 30 21 31 2 22z" fill="#9a9aa0"/>
<path d="M21 30L31 19 31 20 21 31z" fill="#55555a"/>
</svg>
</body>
</html>
